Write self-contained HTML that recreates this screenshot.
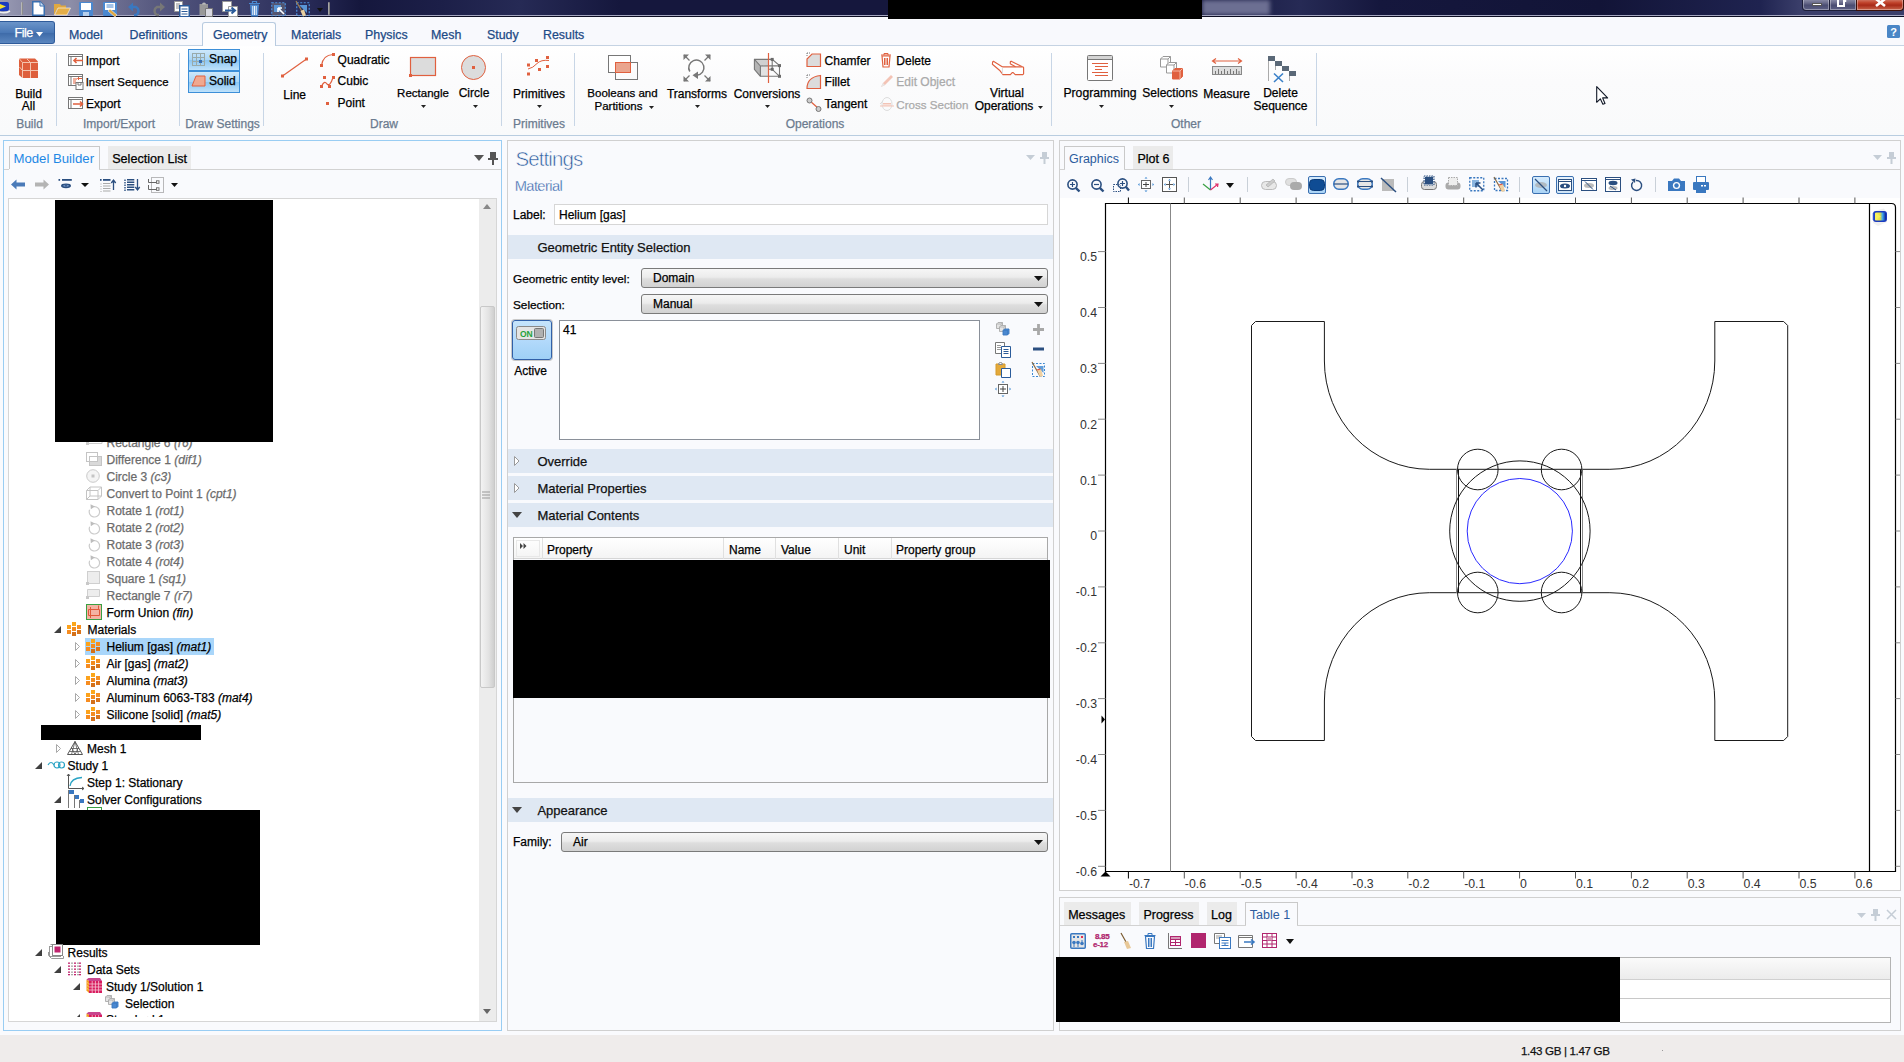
<!DOCTYPE html>
<html><head><meta charset="utf-8">
<style>
html,body{margin:0;padding:0;width:1904px;height:1062px;overflow:hidden;background:#f9fafd;}
body{position:relative;font-family:"Liberation Sans",sans-serif;}
.b{position:absolute;box-sizing:border-box;}
.t{position:absolute;white-space:nowrap;line-height:1;-webkit-text-stroke:0.25px currentColor;}
svg.b{overflow:visible;}
</style></head><body>
<div class="b" style="left:0px;top:0px;width:1904px;height:17px;background:linear-gradient(90deg,#9a9bb4 0px,#7e809e 40px,#8d8ea8 70px,#6e7092 110px,#5a5c82 150px,#474a74 200px,#3a3d68 250px,#2a2d5a 300px,#15173d 360px,#1c1f48 440px,#262a55 520px,#15173d 620px,#15173d 1200px,#262a55 1300px,#15173d 1380px,#121437 1600px,#1f2350 1760px,#3a3e6a 1800px);"></div>
<div class="b" style="left:1202px;top:0px;width:68px;height:15px;background:#6c6f92;filter:blur(2px);"></div>
<div class="b" style="left:0px;top:15px;width:1904px;height:1px;background:#a4a6c0;"></div>
<div class="b" style="left:0px;top:16px;width:1904px;height:1px;background:#0c0d22;"></div>
<svg class="b" style="left:0px;top:1px;" width="10" height="12" viewBox="0 0 10 12"><rect x="-3" y="1" width="12" height="9" rx="2" fill="#1a3bbf"/><path d="M0 3L6 5.5L0 8Z" fill="#f5e02a"/><path d="M-1 11Q5 13 10 10" stroke="#eee" stroke-width="1.5" fill="none"/></svg>
<div class="b" style="left:21px;top:2px;width:2px;height:13px;background:linear-gradient(90deg,#ccc,#777);border-radius:1px;"></div>
<svg class="b" style="left:32px;top:1px;" width="13" height="15" viewBox="0 0 13 15"><path d="M0.75 0.75H8L12.25 5V14.25H0.75Z" fill="#fff" stroke="#3a6fb0" stroke-width="1.5"/><path d="M8 0.75V5H12" fill="#cfe0f4" stroke="#3a6fb0"/></svg>
<svg class="b" style="left:54px;top:3px;" width="17" height="12" viewBox="0 0 17 12"><path d="M0 1H6L7 2.5H12V5H4L0 12Z" fill="#e0a840"/><path d="M0.5 12L4 5H16.5L13 12Z" fill="#e4ae48" stroke="#fff" stroke-width="0.6"/></svg>
<svg class="b" style="left:79px;top:2px;" width="14" height="14" viewBox="0 0 14 14"><rect x="0" y="0" width="14" height="14" rx="1" fill="#4a88d0"/><rect x="2" y="1" width="10" height="7" fill="#fff"/><rect x="4" y="10" width="6" height="4" fill="#fff" opacity="0.6"/></svg>
<svg class="b" style="left:103px;top:2px;" width="16" height="15" viewBox="0 0 16 15"><rect x="0" y="0" width="14" height="14" rx="1" fill="#4a88d0"/><rect x="2" y="1" width="10" height="7" fill="#fff"/><path d="M3.5 3H10.5M3.5 5H10.5" stroke="#4a88d0"/><path d="M7 7L14 13L12 15L5 9Z" fill="#e0a840" stroke="#fff" stroke-width="0.5"/></svg>
<svg class="b" style="left:128px;top:2px;" width="14" height="14" viewBox="0 0 14 14"><path d="M4.5 5H8A4.5 4.5 0 0 1 8 13H6" stroke="#3a78c0" stroke-width="2.4" fill="none"/><path d="M0 5L5 0.5V9.5Z" fill="#3a78c0"/></svg>
<svg class="b" style="left:151px;top:2px;" width="14" height="14" viewBox="0 0 14 14"><path d="M9.5 5H6A4.5 4.5 0 0 0 6 13H8" stroke="#777" stroke-width="2.4" fill="none"/><path d="M14 5L9 0.5V9.5Z" fill="#777"/></svg>
<svg class="b" style="left:174px;top:1px;" width="16" height="16" viewBox="0 0 16 16"><path d="M0.5 0.5H8.5V10.5H0.5Z" fill="#fff" stroke="#999"/><path d="M2 3H6M2 5H6M2 7H6" stroke="#888"/><rect x="5.75" y="4.75" width="9.5" height="11" fill="#fff" stroke="#2b5b9a" stroke-width="1.5"/><path d="M7.5 8H13.5M7.5 10.5H13.5M7.5 13H13.5" stroke="#2b5b9a" stroke-width="1.2"/></svg>
<svg class="b" style="left:199px;top:2px;" width="14" height="15" viewBox="0 0 14 15"><path d="M0.5 2H9V13H0.5Z" fill="#999"/><path d="M3 2.5Q3 0.5 5 0.5Q7 0.5 7 2.5Z" fill="#bbb"/><path d="M6.5 6.5H13.5V14.5H6.5Z" fill="#d8d8e0" stroke="#777"/></svg>
<svg class="b" style="left:222px;top:1px;" width="16" height="16" viewBox="0 0 16 16"><path d="M0.5 0.5H9.5V10.5H0.5Z" fill="#fff" stroke="#999"/><path d="M6.5 5.5H15.5V15.5H6.5Z" fill="#fff" stroke="#999"/><path d="M3 9.5H12M9.5 6.5L13 9.5L9.5 12.5" stroke="#2b5b9a" stroke-width="2" fill="none"/></svg>
<svg class="b" style="left:249px;top:1px;" width="11" height="16" viewBox="0 0 11 16"><path d="M0 2.5H11M3.5 2.5V0.5H7.5V2.5" stroke="#4a88d0" stroke-width="1.2" fill="none"/><path d="M1 3.5L2 15.5H9L10 3.5Z" fill="#4a88d0"/><path d="M3.8 5V14M5.5 5V14M7.2 5V14" stroke="#fff" stroke-width="0.9"/></svg>
<svg class="b" style="left:271px;top:2px;" width="15" height="15" viewBox="0 0 15 15"><rect x="0.75" y="0.75" width="13.5" height="13" fill="#888" fill-opacity="0.4" stroke="#4a90e0" stroke-width="1.2" stroke-dasharray="2 1.5"/><rect x="3" y="3" width="7" height="7" fill="#5a96d6"/><path d="M7 6L13 12M7 6V10M7 6H11" stroke="#fff" stroke-width="1.6" fill="none"/></svg>
<svg class="b" style="left:295px;top:1px;" width="15" height="16" viewBox="0 0 15 16"><rect x="1.75" y="1.75" width="12.5" height="13" fill="none" stroke="#4a90e0" stroke-width="1.2" stroke-dasharray="2 1.5"/><path d="M4 4H12V12Z" fill="#5a96d6"/><path d="M1 0L8.5 13" stroke="#a08050" stroke-width="1.2"/><path d="M5.5 10L9 8.5L11 14.5L8 15.5Z" fill="#e8d0a0"/></svg>
<svg class="b" style="left:317px;top:8px;" width="6" height="4" viewBox="0 0 6 4"><path d="M0 0H6L3 4Z" fill="#111"/></svg>
<div class="b" style="left:328px;top:2px;width:2px;height:13px;background:linear-gradient(90deg,#bbb,#666);border-radius:1px;"></div>
<div class="b" style="left:1802px;top:-2px;width:28px;height:13px;background:linear-gradient(#9a9cb4,#6a6c8c 40%,#4a4d72 60%,#5c5f84);border:1px solid #1c1e38;border-top:none;border-radius:0 0 0 4px;box-shadow:inset 0 0 0 1px rgba(255,255,255,0.35);"></div>
<div class="b" style="left:1812px;top:3px;width:10px;height:3px;background:#fff;border:1px solid #555;"></div>
<div class="b" style="left:1829px;top:-2px;width:28px;height:13px;background:linear-gradient(#9a9cb4,#6a6c8c 40%,#4a4d72 60%,#5c5f84);border:1px solid #1c1e38;border-top:none;box-shadow:inset 0 0 0 1px rgba(255,255,255,0.35);"></div>
<svg class="b" style="left:1837px;top:-1px;" width="10" height="9" viewBox="0 0 10 9"><rect x="1" y="0" width="6" height="7" fill="none" stroke="#fff" stroke-width="2"/><path d="M8.5 0V3" stroke="#fff" stroke-width="1.5"/></svg>
<div class="b" style="left:1856px;top:-2px;width:48px;height:13px;background:linear-gradient(#d99080,#c0422a 40%,#a82a18 60%,#c8644a);border:1px solid #3a1008;border-top:none;border-radius:0 0 4px 0;box-shadow:inset 0 0 0 1px rgba(255,255,255,0.35);"></div>
<svg class="b" style="left:1875px;top:-1px;" width="11" height="8" viewBox="0 0 11 8"><path d="M1 0L10 7M10 0L1 7" stroke="#fff" stroke-width="2.6"/></svg>
<div class="b" style="left:0px;top:17px;width:1904px;height:28px;background:#f8f9fd;"></div>
<div class="b" style="left:0px;top:45px;width:1904px;height:90px;background:linear-gradient(#ffffff,#fbfbfc 40%,#f9fafb);"></div>
<div class="b" style="left:0px;top:45px;width:1904px;height:1px;background:#c5d3e3;"></div>
<div class="b" style="left:0px;top:135px;width:1904px;height:1px;background:#b9cde0;"></div>
<div class="b" style="left:888px;top:0px;width:314px;height:19px;background:#000;"></div>
<div class="b" style="left:0px;top:21px;width:55px;height:23px;background:linear-gradient(#6b94c9,#4a78b6 50%,#3d6aa8 51%,#5a86bf);border:1px solid #2f5b9a;border-left:none;border-radius:0 3px 3px 0;"></div>
<div class="t " style="left:14.6px;top:26.73px;font-size:12.6px;color:#fff;letter-spacing:-0.55px">File</div>
<svg class="b" style="left:36px;top:32px;" width="7" height="5" viewBox="0 0 7 5"><path d="M0 0H7L3.5 4.5Z" fill="#fff"/></svg>
<div class="b" style="left:202px;top:22px;width:74px;height:24px;background:#fdfdfe;border:1px solid #b8cbe0;border-bottom:none;border-radius:3px 3px 0 0;"></div>
<div class="t " style="left:69px;top:28.80px;font-size:12.4px;color:#1d4a86;">Model</div>
<div class="t " style="left:129.5px;top:28.80px;font-size:12.4px;color:#1d4a86;">Definitions</div>
<div class="t " style="left:213px;top:28.80px;font-size:12.4px;color:#1d4a86;">Geometry</div>
<div class="t " style="left:291px;top:28.80px;font-size:12.4px;color:#1d4a86;">Materials</div>
<div class="t " style="left:365px;top:28.80px;font-size:12.4px;color:#1d4a86;">Physics</div>
<div class="t " style="left:431px;top:28.80px;font-size:12.4px;color:#1d4a86;">Mesh</div>
<div class="t " style="left:487px;top:28.80px;font-size:12.4px;color:#1d4a86;">Study</div>
<div class="t " style="left:543px;top:28.80px;font-size:12.4px;color:#1d4a86;">Results</div>
<svg class="b" style="left:1887px;top:25px;" width="13" height="13" viewBox="0 0 13 13"><rect x="0" y="0" width="13" height="13" rx="1.5" fill="#4a86c6"/><text x="6.5" y="10.5" font-size="11" font-weight="bold" text-anchor="middle" fill="#fff" font-family="Liberation Sans">?</text></svg>
<div class="t" style="left:-120.5px;width:300px;text-align:center;top:117.64px;font-size:12px;color:#6b7b8f;">Build</div>
<div class="t" style="left:-31px;width:300px;text-align:center;top:117.64px;font-size:12px;color:#6b7b8f;">Import/Export</div>
<div class="t" style="left:72.5px;width:300px;text-align:center;top:117.64px;font-size:12px;color:#6b7b8f;">Draw Settings</div>
<div class="t" style="left:234px;width:300px;text-align:center;top:117.64px;font-size:12px;color:#6b7b8f;">Draw</div>
<div class="t" style="left:389px;width:300px;text-align:center;top:117.64px;font-size:12px;color:#6b7b8f;">Primitives</div>
<div class="t" style="left:665px;width:300px;text-align:center;top:117.64px;font-size:12px;color:#6b7b8f;">Operations</div>
<div class="t" style="left:1036px;width:300px;text-align:center;top:117.64px;font-size:12px;color:#6b7b8f;">Other</div>
<div class="b" style="left:56px;top:53px;width:1px;height:73px;background:#c8d6e6;"></div>
<div class="b" style="left:179px;top:53px;width:1px;height:73px;background:#c8d6e6;"></div>
<div class="b" style="left:263px;top:53px;width:1px;height:73px;background:#c8d6e6;"></div>
<div class="b" style="left:501px;top:53px;width:1px;height:73px;background:#c8d6e6;"></div>
<div class="b" style="left:574px;top:53px;width:1px;height:73px;background:#c8d6e6;"></div>
<div class="b" style="left:1051px;top:53px;width:1px;height:73px;background:#c8d6e6;"></div>
<div class="b" style="left:1316px;top:53px;width:1px;height:73px;background:#c8d6e6;"></div>
<svg class="b" style="left:19px;top:58px;" width="20" height="21" viewBox="0 0 20 21"><path d="M0 1L1 0.5H16L19 3.5V20H3.5L0 17Z" fill="#de5f3c"/><path d="M3.5 4.5H19M3.5 12.5H19M11.5 4.5V20M3.5 4.5V20M0.5 1L3.5 4.5M8 1L11.5 4.5M0.5 9L3.5 12.5" stroke="#f4c4ae" stroke-width="1"/></svg>
<div class="t" style="left:-121.5px;width:300px;text-align:center;top:87.84px;font-size:12px;color:#000;">Build</div>
<div class="t" style="left:-121.5px;width:300px;text-align:center;top:99.84px;font-size:12px;color:#000;">All</div>
<svg class="b" style="left:68px;top:54px;" width="17" height="14" viewBox="0 0 17 14"><rect x="0.5" y="0.5" width="14" height="11" fill="#fff" stroke="#777"/><path d="M0.5 2.5H14.5M3 2.5V11.5" stroke="#777"/><path d="M15 6.5H6M8.5 4L6 6.5L8.5 9" stroke="#e0603f" stroke-width="1.6" fill="none"/></svg>
<div class="t " style="left:85.7px;top:55.14px;font-size:12px;color:#000;">Import</div>
<svg class="b" style="left:68px;top:74px;" width="17" height="16" viewBox="0 0 17 16"><rect x="0.5" y="0.5" width="14" height="11" fill="#fff" stroke="#777"/><path d="M0.5 2.5H14.5M3 2.5V11.5" stroke="#777"/><path d="M5 5H9M5 7H8M5 9H9" stroke="#e0603f"/><rect x="8" y="8.5" width="7" height="7" fill="#fff" stroke="#777"/><path d="M10 9V11H13V9" stroke="#777" fill="none"/><path d="M14 4.5H10M11 3L9.5 4.5L11 6" stroke="#e0603f" fill="none"/></svg>
<div class="t " style="left:85.7px;top:77.05px;font-size:11.4px;color:#000;">Insert Sequence</div>
<svg class="b" style="left:68px;top:97px;" width="17" height="14" viewBox="0 0 17 14"><rect x="0.5" y="0.5" width="14" height="11" fill="#fff" stroke="#777"/><path d="M0.5 2.5H14.5M3 2.5V11.5" stroke="#777"/><path d="M5 7H14M12 4.5L14.5 7L12 9.5" stroke="#e0603f" stroke-width="1.6" fill="none"/></svg>
<div class="t " style="left:86px;top:98.24px;font-size:12px;color:#000;">Export</div>
<div class="b" style="left:188px;top:49px;width:52px;height:22px;background:linear-gradient(#cde8fb,#a9d6f7 50%,#8cc6f2 51%,#bfe2fb);border:1px solid #3d8fd8;"></div>
<div class="b" style="left:188px;top:71px;width:52px;height:22px;background:linear-gradient(#cde8fb,#a9d6f7 50%,#8cc6f2 51%,#bfe2fb);border:1px solid #3d8fd8;"></div>
<svg class="b" style="left:192px;top:53px;" width="13" height="13" viewBox="0 0 13 13"><rect x="0.5" y="0.5" width="12" height="12" fill="none" stroke="#9aa"/><path d="M4.5 0.5V12.5M8.5 0.5V12.5M0.5 4.5H12.5M0.5 8.5H12.5" stroke="#9aa"/><rect x="7" y="7" width="3" height="3" fill="#3a6fb0"/></svg>
<div class="t " style="left:209px;top:53.04px;font-size:12px;color:#000;">Snap</div>
<svg class="b" style="left:191px;top:75px;" width="15" height="12" viewBox="0 0 15 12"><path d="M1 11L5 1H14V11Z" fill="#f0a890" stroke="#e0603f"/></svg>
<div class="t " style="left:209px;top:75.44px;font-size:12px;color:#000;">Solid</div>
<svg class="b" style="left:280px;top:56px;" width="29" height="22" viewBox="0 0 29 22"><path d="M2.5 20L26.5 3" stroke="#e0603f" stroke-width="1.2"/><rect x="1" y="18.5" width="3" height="3" fill="#e0603f"/><rect x="25" y="1.5" width="3" height="3" fill="#e0603f"/></svg>
<div class="t " style="left:283.3px;top:88.84px;font-size:12px;color:#000;">Line</div>
<svg class="b" style="left:319px;top:52px;" width="17" height="16" viewBox="0 0 17 16"><path d="M2.5 13.5Q4 3 14 2.5" stroke="#e0603f" stroke-width="1.2" fill="none"/><rect x="1" y="12" width="3" height="3" fill="#e0603f"/><rect x="13" y="1" width="3" height="3" fill="#e0603f"/></svg>
<div class="t " style="left:337.6px;top:53.54px;font-size:12px;color:#000;">Quadratic</div>
<svg class="b" style="left:319px;top:75px;" width="17" height="14" viewBox="0 0 17 14"><path d="M2.5 11.5Q5 5 8 9Q11 12 14 2.5" stroke="#e0603f" stroke-width="1.2" fill="none"/><rect x="1" y="10" width="3" height="3" fill="#e0603f"/><rect x="4" y="1" width="3" height="3" fill="#e0603f"/><rect x="9" y="10" width="3" height="3" fill="#e0603f"/><rect x="13" y="1" width="3" height="3" fill="#e0603f"/></svg>
<div class="t " style="left:337.6px;top:75.04px;font-size:12px;color:#000;">Cubic</div>
<div class="b" style="left:326px;top:102px;width:3px;height:3px;background:#e0603f;"></div>
<div class="t " style="left:337.6px;top:97.44px;font-size:12px;color:#000;">Point</div>
<svg class="b" style="left:408px;top:56px;" width="29" height="21" viewBox="0 0 29 21"><rect x="2.5" y="1.5" width="25" height="18" fill="#dcdcdc" stroke="#e0603f" stroke-width="1.2"/><rect x="1" y="18" width="3" height="3" fill="#e0603f"/></svg>
<div class="t" style="left:273px;width:300px;text-align:center;top:87.57px;font-size:11.5px;color:#000;">Rectangle</div>
<svg class="b" style="left:421.0px;top:105.0px;" width="5" height="3" viewBox="0 0 5 3"><path d="M0 0H5L2.5 3Z" fill="#222"/></svg>
<svg class="b" style="left:461px;top:55px;" width="26" height="26" viewBox="0 0 26 26"><circle cx="12.5" cy="12.5" r="12" fill="#dcdcdc" stroke="#e0603f" stroke-width="1"/><rect x="11" y="11" width="3" height="3" fill="#e0603f"/></svg>
<div class="t" style="left:324px;width:300px;text-align:center;top:87.14px;font-size:12px;color:#000;">Circle</div>
<svg class="b" style="left:473.0px;top:105.0px;" width="5" height="3" viewBox="0 0 5 3"><path d="M0 0H5L2.5 3Z" fill="#222"/></svg>
<svg class="b" style="left:527px;top:56px;" width="24" height="20" viewBox="0 0 24 20"><path d="M1 13Q6 12 10 7.5Q14 3.5 22 4.5" stroke="#e0603f" fill="none"/><rect x="0" y="7.5" width="3" height="3" fill="#e0603f"/><rect x="0" y="16.5" width="3" height="3" fill="#e0603f"/><rect x="8" y="3" width="3" height="3" fill="#e0603f"/><rect x="11" y="12" width="3" height="3" fill="#e0603f"/><rect x="19" y="0" width="3" height="3" fill="#e0603f"/><rect x="19" y="9" width="3" height="3" fill="#e0603f"/></svg>
<div class="t" style="left:389px;width:300px;text-align:center;top:87.54px;font-size:12px;color:#000;">Primitives</div>
<svg class="b" style="left:537.0px;top:105.0px;" width="5" height="3" viewBox="0 0 5 3"><path d="M0 0H5L2.5 3Z" fill="#222"/></svg>
<svg class="b" style="left:607px;top:54px;" width="32" height="27" viewBox="0 0 32 27"><rect x="1.5" y="1.5" width="22" height="17" fill="#fff" stroke="#777"/><rect x="8.5" y="8.5" width="22" height="17" fill="none" stroke="#777"/><rect x="8.5" y="8.5" width="15" height="10" fill="#eaa58e" stroke="#e0603f"/></svg>
<div class="t" style="left:472.5px;width:300px;text-align:center;top:87.97px;font-size:11.5px;color:#000;">Booleans and</div>
<div class="t " style="left:594.5px;top:100.97px;font-size:11.5px;color:#000;">Partitions</div>
<svg class="b" style="left:649.0px;top:105.5px;" width="5" height="3" viewBox="0 0 5 3"><path d="M0 0H5L2.5 3Z" fill="#222"/></svg>
<svg class="b" style="left:680px;top:52px;" width="32" height="32" viewBox="0 0 32 32"><path d="M9.8 19.5A7.6 7.6 0 1 1 17.0 23.2" fill="none" stroke="#777" stroke-width="1.5"/><path d="M12.5 23.3L18.0 19.5L18.0 27.0Z" fill="#777"/><path d="M4.0 3.0L9.5 8.5 M30.0 3.0L24.5 8.5 M4.0 29.0L9.5 23.5 M30.0 29.0L24.5 23.5" stroke="#777" stroke-width="1.3"/><path d="M3.5 2.5L9.0 2.5L3.5 8.0Z M30.5 2.5L25.0 2.5L30.5 8.0Z M3.5 29.5L9.0 29.5L3.5 24.0Z M30.5 29.5L25.0 29.5L30.5 24.0Z" fill="#777"/></svg>
<div class="t" style="left:547px;width:300px;text-align:center;top:87.54px;font-size:12px;color:#000;">Transforms</div>
<svg class="b" style="left:695.0px;top:105.0px;" width="5" height="3" viewBox="0 0 5 3"><path d="M0 0H5L2.5 3Z" fill="#222"/></svg>
<svg class="b" style="left:750px;top:52px;" width="32" height="32" viewBox="0 0 32 32"><path d="M4.4 7.4L18.5 7.4L18.5 14.0L10.4 14.0Z" fill="#d0d0d0"/><path d="M10.4 14.0L18.5 14.0L18.5 24.3L10.4 24.3Z" fill="#e2e2e2"/><path d="M4.4 7.4L10.4 14.0L10.4 24.3L4.4 17.3Z" fill="#b4b4b4" stroke="#777" stroke-width="1.1" stroke-linejoin="round"/><path d="M4.4 7.4L22.2 7.4L29.5 13.6L29.5 24.3L10.4 24.3 M10.4 14.0L29.5 13.6 M22.2 7.4L22.2 17.3L29.5 24.3 M18.5 17.3L22.2 17.3" fill="none" stroke="#777" stroke-width="1.1"/><rect x="20.7" y="5.9" width="3" height="3" fill="#6a6a6a"/><rect x="28.0" y="12.1" width="3" height="3" fill="#6a6a6a"/><rect x="20.7" y="15.8" width="3" height="3" fill="#6a6a6a"/><rect x="28.0" y="22.8" width="3" height="3" fill="#6a6a6a"/><path d="M18.5 1.0L18.5 31.0" stroke="#e0603f" stroke-width="1.2"/></svg>
<div class="t" style="left:617px;width:300px;text-align:center;top:87.54px;font-size:12px;color:#000;">Conversions</div>
<svg class="b" style="left:765.0px;top:105.0px;" width="5" height="3" viewBox="0 0 5 3"><path d="M0 0H5L2.5 3Z" fill="#222"/></svg>
<svg class="b" style="left:806px;top:52px;" width="16" height="16" viewBox="0 0 16 16"><path d="M1 1H5M1 1V5" stroke="#777" stroke-dasharray="1 1"/><path d="M1 14.5V7L6 2H14.5V14.5Z" fill="#dcdcdc" stroke="#e0603f" stroke-width="1.2"/></svg>
<div class="t " style="left:824.6px;top:54.54px;font-size:12px;color:#000;">Chamfer</div>
<svg class="b" style="left:806px;top:74px;" width="16" height="16" viewBox="0 0 16 16"><path d="M1 1H5M1 1V5" stroke="#777" stroke-dasharray="1 1"/><path d="M1 14.5Q1 3 14.5 1.5V14.5Z" fill="#dcdcdc" stroke="#e0603f" stroke-width="1.2"/></svg>
<div class="t " style="left:824.6px;top:75.94px;font-size:12px;color:#000;">Fillet</div>
<svg class="b" style="left:806px;top:97px;" width="16" height="16" viewBox="0 0 16 16"><path d="M3.5 3.5L13 12" stroke="#e0603f" stroke-width="1.2"/><circle cx="3.5" cy="3.5" r="2.5" fill="#ccc" stroke="#777"/><circle cx="12.5" cy="12" r="2.5" fill="#ccc" stroke="#777"/></svg>
<div class="t " style="left:824.6px;top:98.24px;font-size:12px;color:#000;">Tangent</div>
<svg class="b" style="left:880px;top:52px;" width="12" height="16" viewBox="0 0 12 16"><path d="M1 3H11M4 3V1.5H8V3" stroke="#e0603f" fill="none"/><path d="M2 4L3 15H9L10 4Z" fill="none" stroke="#e0603f" stroke-width="1.2"/><path d="M4.5 6V13M6 6V13M7.5 6V13" stroke="#e0603f"/></svg>
<div class="t " style="left:896.3px;top:54.54px;font-size:12px;color:#000;">Delete</div>
<svg class="b" style="left:880px;top:74px;" width="14" height="14" viewBox="0 0 14 14"><path d="M1 13L3 9L11 1L13 3L5 11Z" fill="#f3c3b5"/><path d="M1 13L3 9L5 11Z" fill="#e6e6e6"/></svg>
<div class="t " style="left:896.3px;top:75.94px;font-size:12px;color:#aaa;">Edit Object</div>
<svg class="b" style="left:879px;top:96px;" width="16" height="17" viewBox="0 0 16 17"><ellipse cx="8" cy="8" rx="5" ry="6.5" fill="none" stroke="#ddd"/><path d="M1 10H15M4 7.5H12M4 9H12" stroke="#f3c3b5"/><path d="M1 8L4 5" stroke="#ddd"/></svg>
<div class="t " style="left:896.3px;top:98.58px;font-size:11.6px;color:#aaa;">Cross Section</div>
<svg class="b" style="left:990px;top:58px;" width="36" height="20" viewBox="0 0 36 20"><path d="M2.6 4.0L3.4 3.3L12.6 8.9L33.0 8.9L33.6 9.6L33.6 15.8L32.8 16.6L25.2 16.6L23.2 14.6L22.2 14.6L20.4 16.6L13.0 16.6L9.5 12.2L2.4 6.2Z" fill="#fff" stroke="#e0603f" stroke-width="1.15" stroke-linejoin="round"/><path d="M20.2 5.8L20.4 3.6L21.2 3.2L31.8 8.5M20.2 5.8L25.5 8.7" fill="none" stroke="#e0603f" stroke-width="1.15" stroke-linejoin="round"/><path d="M12.4 9.5L12.4 16.0" stroke="#ddd" stroke-width="1"/></svg>
<div class="t" style="left:857px;width:300px;text-align:center;top:87.34px;font-size:12px;color:#000;">Virtual</div>
<div class="t" style="left:854px;width:300px;text-align:center;top:100.04px;font-size:12px;color:#000;">Operations</div>
<svg class="b" style="left:1038.0px;top:105.5px;" width="5" height="3" viewBox="0 0 5 3"><path d="M0 0H5L2.5 3Z" fill="#222"/></svg>
<svg class="b" style="left:1087px;top:55px;" width="26" height="26" viewBox="0 0 26 26"><rect x="0.5" y="0.5" width="25" height="25" rx="1" fill="#fff" stroke="#777"/><rect x="1" y="1" width="24" height="3.5" fill="#d4d4d4"/><path d="M0.5 4.5H25.5" stroke="#777"/><path d="M5 8.5H21M8 11.5H21M8 14.5H15M5 17.5H21M8 20.5H21" stroke="#e0603f"/></svg>
<div class="t" style="left:950px;width:300px;text-align:center;top:87.17px;font-size:12.2px;color:#000;">Programming</div>
<svg class="b" style="left:1099.0px;top:105.0px;" width="5" height="3" viewBox="0 0 5 3"><path d="M0 0H5L2.5 3Z" fill="#222"/></svg>
<svg class="b" style="left:1159px;top:55px;" width="26" height="26" viewBox="0 0 26 26"><path d="M1.5 4.0L4.0 1.5H11.5L11.5 9.5L9.0 12.0H1.5Z" fill="#fff" stroke="#999"/><path d="M1.5 4.0H9.0V12.0M9.0 4.0L11.5 1.5" fill="none" stroke="#999"/><path d="M7.5 10.0L10.0 7.5H17.5L17.5 15.5L15.0 18.0H7.5Z" fill="#fff" stroke="#999"/><path d="M7.5 10.0H15.0V18.0M15.0 10.0L17.5 7.5" fill="none" stroke="#999"/><path d="M13.5 16.0L16.0 13.5H23.5L23.5 21.5L21.0 24.0H13.5Z" fill="#e0603f" stroke="#e0603f"/><path d="M13.5 16.0H21.0V24.0M21.0 16.0L23.5 13.5" fill="none" stroke="#f5b8a4"/></svg>
<div class="t" style="left:1020px;width:300px;text-align:center;top:87.34px;font-size:12px;color:#000;">Selections</div>
<svg class="b" style="left:1169.0px;top:105.0px;" width="5" height="3" viewBox="0 0 5 3"><path d="M0 0H5L2.5 3Z" fill="#222"/></svg>
<svg class="b" style="left:1211px;top:58px;" width="32" height="18" viewBox="0 0 32 18"><path d="M1.5 3H30.5M5 0.5L1.5 3L5 5.5M27 0.5L30.5 3L27 5.5" stroke="#e0603f" stroke-width="1.2" fill="none"/><rect x="1.5" y="8.5" width="29" height="8" fill="#ddd" stroke="#888"/><path d="M4.5 16V13M7.5 16V11M10.5 16V13M13.5 16V11M16.5 16V13M19.5 16V11M22.5 16V13M25.5 16V11M28 16V13" stroke="#777"/></svg>
<div class="t" style="left:1076.5px;width:300px;text-align:center;top:87.84px;font-size:12px;color:#000;">Measure</div>
<svg class="b" style="left:1267px;top:55px;" width="30" height="28" viewBox="0 0 30 28"><path d="M1.5 5V26M8.5 10V15M22.5 21V26" stroke="#aaa"/><rect x="1" y="1" width="7" height="5" fill="#5a6877"/><rect x="8" y="6" width="7" height="5" fill="#5a6877"/><rect x="15" y="11" width="7" height="5" fill="#5a6877"/><rect x="22" y="16" width="7" height="5" fill="#5a6877"/><path d="M7 18.5L16 27M16 18.5L7 27" stroke="#3a80c8" stroke-width="1.6"/></svg>
<div class="t" style="left:1130.5px;width:300px;text-align:center;top:87.34px;font-size:12px;color:#000;">Delete</div>
<div class="t" style="left:1130.5px;width:300px;text-align:center;top:100.34px;font-size:12px;color:#000;">Sequence</div>
<svg class="b" style="left:1596px;top:86px;" width="13" height="20" viewBox="0 0 13 20"><path d="M0.7 0.7V16.3L4.3 12.8L6.9 18.3L9 17.5L6.6 11.9H11.6Z" fill="#fff" stroke="#111827" stroke-width="1.1" stroke-linejoin="round"/></svg>
<div class="b" style="left:3px;top:140px;width:499px;height:891px;border:1px solid #99cdf3;background:#f9fafd;"></div>
<div class="b" style="left:9px;top:146px;width:91px;height:24px;background:#f9fafd;border:1px solid #c9c9c9;border-bottom:none;"></div>
<div class="b" style="left:4px;top:169px;width:497px;height:1px;background:#d2d2d2;"></div>
<div class="b" style="left:9px;top:169px;width:90px;height:1px;background:#f9fafd;"></div>
<div class="t " style="left:13.4px;top:152.43px;font-size:13.2px;color:#1e88e5;-webkit-text-stroke:0">Model Builder</div>
<div class="b" style="left:108px;top:146px;width:83px;height:23px;background:#ebebeb;"></div>
<div class="t " style="left:112.2px;top:152.93px;font-size:12.6px;color:#000;">Selection List</div>
<svg class="b" style="left:474px;top:155px;" width="10" height="6" viewBox="0 0 10 6"><path d="M0 0H10L5 6Z" fill="#555"/></svg>
<svg class="b" style="left:488px;top:151px;" width="10" height="14" viewBox="0 0 10 14"><path d="M2 1H8V7H10V9H6V14H4V9H0V7H2Z" fill="#555"/></svg>
<svg class="b" style="left:10px;top:179px;" width="16" height="11" viewBox="0 0 16 11"><path d="M1 5.5L6.5 0.5V3.5H15V7.5H6.5V10.5Z" fill="#4a7ab8"/></svg>
<svg class="b" style="left:34px;top:179px;" width="16" height="11" viewBox="0 0 16 11"><path d="M15 5.5L9.5 0.5V3.5H1V7.5H9.5V10.5Z" fill="#b4b4b4"/></svg>
<svg class="b" style="left:58px;top:178px;" width="15" height="11" viewBox="0 0 15 11"><rect x="0.5" y="1" width="1.6" height="1.8" fill="#2b4f80"/><rect x="4" y="1" width="9.8" height="1.8" fill="#2b4f80"/><ellipse cx="8" cy="7.8" rx="5" ry="2.4" fill="#2b4f80"/><ellipse cx="8" cy="7.8" rx="3" ry="1.1" fill="#6d8fbf"/><circle cx="8" cy="7.8" r="0.9" fill="#2b4f80"/></svg>
<svg class="b" style="left:81px;top:183px;" width="8" height="4" viewBox="0 0 8 4"><path d="M0 0H8L4 4Z" fill="#111"/></svg>
<svg class="b" style="left:100px;top:178px;" width="17" height="14" viewBox="0 0 17 14"><rect x="0" y="1" width="1.6" height="1.8" fill="#2b4f80"/><rect x="3" y="1" width="7.5" height="1.8" fill="#2b4f80"/><path d="M1 5.5V14" stroke="#aaa" stroke-dasharray="1 1.5"/><path d="M3 5.5H10.5M3 8H10.5M3 10.5H10.5M3 13H10.5" stroke="#aaa" stroke-width="1.2"/><path d="M13.5 12V2.5M11.3 5L13.5 2L15.7 5" stroke="#2b4f80" stroke-width="1.3" fill="none"/></svg>
<svg class="b" style="left:124px;top:178px;" width="17" height="14" viewBox="0 0 17 14"><path d="M1 1.5V14" stroke="#2b4f80" stroke-width="1.4" stroke-dasharray="1.4 1.1"/><path d="M3 1.8H10.3M3 4.3H10.3M3 6.8H10.3M3 9.3H10.3M3 11.8H10.3" stroke="#2b4f80" stroke-width="1.4"/><path d="M13.5 1V11.5M11.3 9L13.5 12L15.7 9" stroke="#2b4f80" stroke-width="1.3" fill="none"/></svg>
<svg class="b" style="left:147px;top:177px;" width="17" height="16" viewBox="0 0 17 16"><rect x="4.5" y="0.5" width="12" height="15" fill="none" stroke="#777" stroke-dasharray="1 1"/><path d="M1.5 2V5.5H10M1.5 8V12.5H10" stroke="#666" fill="none"/><rect x="9.5" y="3.8" width="2.5" height="2.5" fill="#fff" stroke="#666" stroke-width="0.9"/><rect x="9.5" y="10.8" width="2.5" height="2.5" fill="#fff" stroke="#666" stroke-width="0.9"/></svg>
<svg class="b" style="left:171px;top:183px;" width="7" height="4" viewBox="0 0 7 4"><path d="M0 0H7L3.5 4Z" fill="#111"/></svg>
<div class="b" style="left:8px;top:198px;width:489px;height:824px;background:#fff;border:1px solid #d6d6d6;"></div>
<div class="b" style="left:479px;top:199px;width:17px;height:822px;background:#ececec;"></div>
<svg class="b" style="left:483px;top:204px;" width="8" height="5" viewBox="0 0 8 5"><path d="M0 5H8L4 0Z" fill="#888"/></svg>
<svg class="b" style="left:483px;top:1009px;" width="8" height="5" viewBox="0 0 8 5"><path d="M0 0H8L4 5Z" fill="#666"/></svg>
<div class="b" style="left:480px;top:306px;width:15px;height:382px;background:linear-gradient(90deg,#f3f3f3,#e2e2e2 60%,#cfcfcf);border:1px solid #c8c8c8;border-radius:2px;"></div>
<svg class="b" style="left:481px;top:490px;" width="10" height="12" viewBox="0 0 10 12"><path d="M1 2H9M1 5H9M1 8H9" stroke="#999"/></svg>
<svg class="b" style="left:86px;top:436px;" width="17" height="9" viewBox="0 0 17 9"><path d="M2 0.5H16V7.5H2Z" fill="#fff" stroke="#ccc"/><rect x="0" y="6" width="3" height="3" fill="#ccc"/></svg>
<div class="t" style="left:106.5px;top:437.34px;font-size:12px;color:#6b6b6b">Rectangle 6 <i style="color:#6b6b6b">(r6)</i></div>
<svg class="b" style="left:86px;top:452px;" width="16" height="14" viewBox="0 0 16 14"><rect x="0.5" y="0.5" width="11" height="9" fill="#fff" stroke="#c4c4c4"/><rect x="3.5" y="4.5" width="12" height="9" fill="#d9d9d9" stroke="#c4c4c4"/><rect x="3.5" y="4.5" width="8" height="5" fill="#fff" stroke="#c4c4c4"/></svg>
<div class="t" style="left:106.5px;top:454.34px;font-size:12px;color:#6b6b6b">Difference 1 <i style="color:#6b6b6b">(dif1)</i></div>
<svg class="b" style="left:86px;top:469px;" width="14" height="14" viewBox="0 0 14 14"><circle cx="7" cy="7" r="6.3" fill="#f4f4f4" stroke="#cacaca"/><rect x="5.5" y="5.5" width="3" height="3" fill="#c4c4c4"/></svg>
<div class="t" style="left:106.5px;top:471.34px;font-size:12px;color:#6b6b6b">Circle 3 <i style="color:#6b6b6b">(c3)</i></div>
<svg class="b" style="left:86px;top:486px;" width="16" height="14" viewBox="0 0 16 14"><path d="M0.5 4.5L4 1H15.5V10L12 13.5H0.5Z M0.5 4.5H12V13.5M12 4.5L15.5 1" fill="#fff" stroke="#c4c4c4"/><path d="M4 1V10H15.5M0.5 13.5L4 10" stroke="#c4c4c4" fill="none"/></svg>
<div class="t" style="left:106.5px;top:488.34px;font-size:12px;color:#6b6b6b">Convert to Point 1 <i style="color:#6b6b6b">(cpt1)</i></div>
<svg class="b" style="left:88px;top:504px;" width="13" height="14" viewBox="0 0 13 14"><path d="M6 2.6A5.2 5.2 0 1 1 1.6 5.8" fill="none" stroke="#cbcbcb" stroke-width="1.2"/><path d="M2.5 0.2L2.8 5.2L7 2.4Z" fill="#bdbdbd"/></svg>
<div class="t" style="left:106.5px;top:505.34px;font-size:12px;color:#6b6b6b">Rotate 1 <i style="color:#6b6b6b">(rot1)</i></div>
<svg class="b" style="left:88px;top:521px;" width="13" height="14" viewBox="0 0 13 14"><path d="M6 2.6A5.2 5.2 0 1 1 1.6 5.8" fill="none" stroke="#cbcbcb" stroke-width="1.2"/><path d="M2.5 0.2L2.8 5.2L7 2.4Z" fill="#bdbdbd"/></svg>
<div class="t" style="left:106.5px;top:522.34px;font-size:12px;color:#6b6b6b">Rotate 2 <i style="color:#6b6b6b">(rot2)</i></div>
<svg class="b" style="left:88px;top:538px;" width="13" height="14" viewBox="0 0 13 14"><path d="M6 2.6A5.2 5.2 0 1 1 1.6 5.8" fill="none" stroke="#cbcbcb" stroke-width="1.2"/><path d="M2.5 0.2L2.8 5.2L7 2.4Z" fill="#bdbdbd"/></svg>
<div class="t" style="left:106.5px;top:539.34px;font-size:12px;color:#6b6b6b">Rotate 3 <i style="color:#6b6b6b">(rot3)</i></div>
<svg class="b" style="left:88px;top:555px;" width="13" height="14" viewBox="0 0 13 14"><path d="M6 2.6A5.2 5.2 0 1 1 1.6 5.8" fill="none" stroke="#cbcbcb" stroke-width="1.2"/><path d="M2.5 0.2L2.8 5.2L7 2.4Z" fill="#bdbdbd"/></svg>
<div class="t" style="left:106.5px;top:556.34px;font-size:12px;color:#6b6b6b">Rotate 4 <i style="color:#6b6b6b">(rot4)</i></div>
<svg class="b" style="left:86px;top:571px;" width="15" height="14" viewBox="0 0 15 14"><rect x="1.5" y="0.5" width="12" height="12" fill="#ededed" stroke="#cfcfcf"/><rect x="0" y="11" width="3" height="3" fill="#c8c8c8"/></svg>
<div class="t" style="left:106.5px;top:573.34px;font-size:12px;color:#6b6b6b">Square 1 <i style="color:#6b6b6b">(sq1)</i></div>
<svg class="b" style="left:86px;top:589px;" width="15" height="10" viewBox="0 0 15 10"><path d="M1.5 0.5H13.5V7.5H1.5Z" fill="#ededed" stroke="#cfcfcf"/><rect x="0" y="7" width="3" height="3" fill="#c8c8c8"/></svg>
<div class="t" style="left:106.5px;top:590.34px;font-size:12px;color:#6b6b6b">Rectangle 7 <i style="color:#6b6b6b">(r7)</i></div>
<svg class="b" style="left:86px;top:604px;" width="16" height="16" viewBox="0 0 16 16"><rect x="0.5" y="0.5" width="15" height="15" fill="#f4b3a3" stroke="#3aa043"/><path d="M2.5 5.5H13.5V11.5H2.5ZM4.5 3V14M12.5 1.5V5" fill="none" stroke="#e05a3a"/></svg>
<div class="t" style="left:106.5px;top:607.34px;font-size:12px;color:#000">Form Union <i style="color:#000">(fin)</i></div>
<svg class="b" style="left:54px;top:626px;" width="7" height="7" viewBox="0 0 7 7"><path d="M7 0V7H0Z" fill="#404040"/></svg>
<svg class="b" style="left:67px;top:622px;" width="14" height="14" viewBox="0 0 14 14"><rect x="5" y="0" width="4" height="4" fill="#fba61a"/><rect x="0" y="3" width="4" height="4" fill="#fca21c"/><rect x="10" y="3" width="4" height="4" fill="#f58f22"/><rect x="5" y="5" width="4" height="4" fill="#f38b1f"/><rect x="0" y="8" width="4" height="4" fill="#f68c20"/><rect x="10" y="8" width="4" height="4" fill="#d9741b"/><rect x="5" y="10" width="4" height="4" fill="#d4711a"/></svg>
<div class="t " style="left:87.5px;top:624.34px;font-size:12px;color:#000;">Materials</div>
<div class="b" style="left:85px;top:638px;width:129px;height:17px;background:#a9d6fa;"></div>
<svg class="b" style="left:75px;top:642px;" width="5" height="9" viewBox="0 0 5 9"><path d="M0.5 0.5L4.5 4.5L0.5 8.5Z" fill="#fff" stroke="#a8a8a8"/></svg>
<svg class="b" style="left:86px;top:639px;" width="14" height="14" viewBox="0 0 14 14"><rect x="5" y="0" width="4" height="4" fill="#fba61a"/><rect x="0" y="3" width="4" height="4" fill="#fca21c"/><rect x="10" y="3" width="4" height="4" fill="#f58f22"/><rect x="5" y="5" width="4" height="4" fill="#f38b1f"/><rect x="0" y="8" width="4" height="4" fill="#f68c20"/><rect x="10" y="8" width="4" height="4" fill="#d9741b"/><rect x="5" y="10" width="4" height="4" fill="#d4711a"/></svg>
<div class="t" style="left:106.5px;top:641.34px;font-size:12px;color:#000">Helium [gas] <i style="color:#000">(mat1)</i></div>
<svg class="b" style="left:75px;top:659px;" width="5" height="9" viewBox="0 0 5 9"><path d="M0.5 0.5L4.5 4.5L0.5 8.5Z" fill="#fff" stroke="#a8a8a8"/></svg>
<svg class="b" style="left:86px;top:656px;" width="14" height="14" viewBox="0 0 14 14"><rect x="5" y="0" width="4" height="4" fill="#fba61a"/><rect x="0" y="3" width="4" height="4" fill="#fca21c"/><rect x="10" y="3" width="4" height="4" fill="#f58f22"/><rect x="5" y="5" width="4" height="4" fill="#f38b1f"/><rect x="0" y="8" width="4" height="4" fill="#f68c20"/><rect x="10" y="8" width="4" height="4" fill="#d9741b"/><rect x="5" y="10" width="4" height="4" fill="#d4711a"/></svg>
<div class="t" style="left:106.5px;top:658.34px;font-size:12px;color:#000">Air [gas] <i style="color:#000">(mat2)</i></div>
<svg class="b" style="left:75px;top:676px;" width="5" height="9" viewBox="0 0 5 9"><path d="M0.5 0.5L4.5 4.5L0.5 8.5Z" fill="#fff" stroke="#a8a8a8"/></svg>
<svg class="b" style="left:86px;top:673px;" width="14" height="14" viewBox="0 0 14 14"><rect x="5" y="0" width="4" height="4" fill="#fba61a"/><rect x="0" y="3" width="4" height="4" fill="#fca21c"/><rect x="10" y="3" width="4" height="4" fill="#f58f22"/><rect x="5" y="5" width="4" height="4" fill="#f38b1f"/><rect x="0" y="8" width="4" height="4" fill="#f68c20"/><rect x="10" y="8" width="4" height="4" fill="#d9741b"/><rect x="5" y="10" width="4" height="4" fill="#d4711a"/></svg>
<div class="t" style="left:106.5px;top:675.34px;font-size:12px;color:#000">Alumina <i style="color:#000">(mat3)</i></div>
<svg class="b" style="left:75px;top:693px;" width="5" height="9" viewBox="0 0 5 9"><path d="M0.5 0.5L4.5 4.5L0.5 8.5Z" fill="#fff" stroke="#a8a8a8"/></svg>
<svg class="b" style="left:86px;top:690px;" width="14" height="14" viewBox="0 0 14 14"><rect x="5" y="0" width="4" height="4" fill="#fba61a"/><rect x="0" y="3" width="4" height="4" fill="#fca21c"/><rect x="10" y="3" width="4" height="4" fill="#f58f22"/><rect x="5" y="5" width="4" height="4" fill="#f38b1f"/><rect x="0" y="8" width="4" height="4" fill="#f68c20"/><rect x="10" y="8" width="4" height="4" fill="#d9741b"/><rect x="5" y="10" width="4" height="4" fill="#d4711a"/></svg>
<div class="t" style="left:106.5px;top:692.34px;font-size:12px;color:#000">Aluminum 6063-T83 <i style="color:#000">(mat4)</i></div>
<svg class="b" style="left:75px;top:710px;" width="5" height="9" viewBox="0 0 5 9"><path d="M0.5 0.5L4.5 4.5L0.5 8.5Z" fill="#fff" stroke="#a8a8a8"/></svg>
<svg class="b" style="left:86px;top:707px;" width="14" height="14" viewBox="0 0 14 14"><rect x="5" y="0" width="4" height="4" fill="#fba61a"/><rect x="0" y="3" width="4" height="4" fill="#fca21c"/><rect x="10" y="3" width="4" height="4" fill="#f58f22"/><rect x="5" y="5" width="4" height="4" fill="#f38b1f"/><rect x="0" y="8" width="4" height="4" fill="#f68c20"/><rect x="10" y="8" width="4" height="4" fill="#d9741b"/><rect x="5" y="10" width="4" height="4" fill="#d4711a"/></svg>
<div class="t" style="left:106.5px;top:709.34px;font-size:12px;color:#000">Silicone [solid] <i style="color:#000">(mat5)</i></div>
<div class="b" style="left:55px;top:200px;width:218px;height:242px;background:#000;"></div>
<div class="b" style="left:41px;top:725px;width:160px;height:15px;background:#000;"></div>
<svg class="b" style="left:56px;top:744px;" width="5" height="9" viewBox="0 0 5 9"><path d="M0.5 0.5L4.5 4.5L0.5 8.5Z" fill="#fff" stroke="#a8a8a8"/></svg>
<svg class="b" style="left:67px;top:741px;" width="16" height="14" viewBox="0 0 16 14"><path d="M8 0.5L15.5 13.5H0.5Z" fill="#fff" stroke="#555"/><path d="M4 7.5H12M2.5 10.5H13.5M8 0.5L4.5 13.5M8 0.5L11.5 13.5M5 7.5L8 13.5L11 7.5" stroke="#555" fill="none" stroke-width="0.8"/></svg>
<div class="t " style="left:87px;top:743.34px;font-size:12px;color:#000;">Mesh 1</div>
<svg class="b" style="left:35px;top:762px;" width="7" height="7" viewBox="0 0 7 7"><path d="M7 0V7H0Z" fill="#404040"/></svg>
<svg class="b" style="left:48px;top:760px;" width="17" height="10" viewBox="0 0 17 10"><path d="M0 5Q3 0 6 5" stroke="#2aa3c4" fill="none" stroke-width="1.2"/><circle cx="9" cy="5" r="3" fill="none" stroke="#2aa3c4" stroke-width="1.2"/><circle cx="13.5" cy="5" r="3" fill="none" stroke="#2aa3c4" stroke-width="1.2"/></svg>
<div class="t " style="left:67.6px;top:760.34px;font-size:12px;color:#000;">Study 1</div>
<svg class="b" style="left:67px;top:774px;" width="18" height="16" viewBox="0 0 18 16"><path d="M1.5 0V14.5H17" stroke="#555" fill="none"/><path d="M3 12Q4 4 15 3.5" stroke="#2aa3c4" fill="none" stroke-width="1.3"/><path d="M0 2L1.5 0L3 2M15 13L17 14.5L15 16" stroke="#555" fill="none"/></svg>
<div class="t " style="left:87px;top:777.34px;font-size:12px;color:#000;">Step 1: Stationary</div>
<svg class="b" style="left:54px;top:796px;" width="7" height="7" viewBox="0 0 7 7"><path d="M7 0V7H0Z" fill="#404040"/></svg>
<svg class="b" style="left:67px;top:790px;" width="17" height="18" viewBox="0 0 17 18"><path d="M1.5 0V18M7.5 5V18M12.5 10V18" stroke="#777" fill="none"/><rect x="2" y="0" width="5" height="4" fill="#3a78c0"/><rect x="8" y="5" width="4" height="4" fill="#3a78c0"/><rect x="13" y="9" width="4" height="4" fill="#3a78c0"/></svg>
<div class="t " style="left:87px;top:794.34px;font-size:12px;color:#000;">Solver Configurations</div>
<div class="b" style="left:87px;top:807px;width:15px;height:3px;border:1px solid #3aa043;border-bottom:none;background:#fff;"></div>
<div class="b" style="left:56px;top:810px;width:204px;height:135px;background:#000;"></div>
<svg class="b" style="left:35px;top:949px;" width="7" height="7" viewBox="0 0 7 7"><path d="M7 0V7H0Z" fill="#404040"/></svg>
<svg class="b" style="left:48px;top:943px;" width="17" height="17" viewBox="0 0 17 17"><path d="M2.5 1.5H10.5V4M0.5 9V12.5L3.5 15.5H15.5V13" fill="none" stroke="#999"/><rect x="1.5" y="3.5" width="11" height="10" fill="#fff" stroke="#999"/><rect x="4.5" y="1.5" width="10" height="11" fill="#fff" stroke="#888"/><rect x="6.5" y="3.5" width="6" height="6" fill="#c0246e"/></svg>
<div class="t " style="left:67.6px;top:947.34px;font-size:12px;color:#000;">Results</div>
<svg class="b" style="left:54px;top:966px;" width="7" height="7" viewBox="0 0 7 7"><path d="M7 0V7H0Z" fill="#404040"/></svg>
<svg class="b" style="left:68px;top:962px;" width="14" height="14" viewBox="0 0 14 14"><rect x="0" y="0.5" width="2" height="1.3" fill="#c0246e"/><rect x="0" y="3.5" width="2" height="1.3" fill="#c0246e"/><rect x="0" y="6.5" width="2" height="1.3" fill="#c0246e"/><rect x="0" y="9.5" width="2" height="1.3" fill="#c0246e"/><rect x="0" y="12" width="2" height="1.3" fill="#c0246e"/><rect x="3" y="0.5" width="2" height="1.3" fill="#aaa"/><rect x="3" y="3.5" width="2" height="1.3" fill="#aaa"/><rect x="3" y="6.5" width="2" height="1.3" fill="#aaa"/><rect x="3" y="9.5" width="2" height="1.3" fill="#aaa"/><rect x="3" y="12" width="2" height="1.3" fill="#aaa"/><rect x="6" y="0.5" width="2" height="1.3" fill="#c0246e"/><rect x="6" y="3.5" width="2" height="1.3" fill="#c0246e"/><rect x="6" y="6.5" width="2" height="1.3" fill="#c0246e"/><rect x="6" y="9.5" width="2" height="1.3" fill="#c0246e"/><rect x="6" y="12" width="2" height="1.3" fill="#c0246e"/><rect x="9" y="0.5" width="2" height="1.3" fill="#aaa"/><rect x="9" y="3.5" width="2" height="1.3" fill="#aaa"/><rect x="9" y="6.5" width="2" height="1.3" fill="#aaa"/><rect x="9" y="9.5" width="2" height="1.3" fill="#aaa"/><rect x="9" y="12" width="2" height="1.3" fill="#aaa"/><rect x="11" y="0.5" width="2" height="1.3" fill="#c0246e"/><rect x="11" y="3.5" width="2" height="1.3" fill="#c0246e"/><rect x="11" y="6.5" width="2" height="1.3" fill="#c0246e"/><rect x="11" y="9.5" width="2" height="1.3" fill="#c0246e"/><rect x="11" y="12" width="2" height="1.3" fill="#c0246e"/></svg>
<div class="t " style="left:87px;top:964.34px;font-size:12px;color:#000;">Data Sets</div>
<svg class="b" style="left:73px;top:983px;" width="7" height="7" viewBox="0 0 7 7"><path d="M7 0V7H0Z" fill="#404040"/></svg>
<svg class="b" style="left:86px;top:978px;" width="16" height="15" viewBox="0 0 16 15"><path d="M0.5 1.5L2.5 0H14L16 3H3Z" fill="#c8468e"/><path d="M0.5 1.5L3 3V15L0.5 12.5Z" fill="#f39a1e"/><rect x="3" y="3" width="13" height="12" fill="#d81b5e"/><path d="M6.2 3V15M9.4 3V15M12.6 3V15M3 6H16M3 9H16M3 12H16" stroke="#f6c4d4" stroke-width="0.8"/><path d="M1 4.5L2.5 5.5M1 7.5L2.5 8.5M1 10.5L2.5 11.5" stroke="#fbd8a0" stroke-width="0.7"/></svg>
<div class="t " style="left:106px;top:981.34px;font-size:12px;color:#000;">Study 1/Solution 1</div>
<svg class="b" style="left:105px;top:995px;" width="14" height="14" viewBox="0 0 14 14"><path d="M0.5 2.0L2.0 0.5H6.5V5.0L5.0 6.5H0.5Z" fill="#e4e4e4" stroke="#aaa" stroke-width="0.9"/><path d="M0.5 2.0H5.0V6.5M5.0 2.0L6.5 0.5" fill="none" stroke="#aaa" stroke-width="0.7"/><path d="M3.5 5.0L5.0 3.5H9.5V8.0L8.0 9.5H3.5Z" fill="#e4e4e4" stroke="#aaa" stroke-width="0.9"/><path d="M3.5 5.0H8.0V9.5M8.0 5.0L9.5 3.5" fill="none" stroke="#aaa" stroke-width="0.7"/><path d="M7 8.5L8.5 7H13V11.5L11.5 13H7Z" fill="#4a88d0" stroke="#3a78c0" stroke-width="0.9"/><path d="M7 8.5H11.5V13M11.5 8.5L13 7" fill="none" stroke="#3a78c0" stroke-width="0.7"/></svg>
<div class="t " style="left:125px;top:998.34px;font-size:12px;color:#000;">Selection</div>
<div class="b" style="left:9px;top:1012px;width:470px;height:5px;overflow:hidden;">
<svg class="b" style="left:64px;top:2px;" width="7" height="7" viewBox="0 0 7 7"><path d="M7 0V7H0Z" fill="#404040"/></svg>
<svg class="b" style="left:77px;top:0px;" width="16" height="15" viewBox="0 0 16 15"><path d="M0.5 1.5L2.5 0H14L16 3H3Z" fill="#c8468e"/><path d="M0.5 1.5L3 3V15L0.5 12.5Z" fill="#f39a1e"/><rect x="3" y="3" width="13" height="12" fill="#d81b5e"/><path d="M6.2 3V15M9.4 3V15M12.6 3V15M3 6H16M3 9H16M3 12H16" stroke="#f6c4d4" stroke-width="0.8"/><path d="M1 4.5L2.5 5.5M1 7.5L2.5 8.5M1 10.5L2.5 11.5" stroke="#fbd8a0" stroke-width="0.7"/></svg>
<div class="t " style="left:97px;top:2.44px;font-size:12px;color:#000;">Standard 1</div>
</div>
<div class="b" style="left:507px;top:140px;width:547px;height:891px;border:1px solid #d0d0d0;background:#f9fafd;"></div>
<div class="t " style="left:515.5px;top:149.45px;font-size:20.5px;color:#2d5c9e;-webkit-text-stroke:0.55px #f9fafd;letter-spacing:-0.9px">Settings</div>
<div class="t " style="left:514.7px;top:178.56px;font-size:14.7px;color:#2d5ea8;-webkit-text-stroke:0.3px #f9fafd;letter-spacing:-0.6px">Material</div>
<svg class="b" style="left:1026px;top:155px;" width="9" height="5" viewBox="0 0 9 5"><path d="M0 0H9L4.5 5Z" fill="#c5cdd6"/></svg>
<svg class="b" style="left:1040px;top:151px;" width="9" height="13" viewBox="0 0 9 13"><path d="M2 1H7V6H9V8H5.5V13H3.5V8H0V6H2Z" fill="#c5cdd6"/></svg>
<div class="t " style="left:513px;top:208.84px;font-size:12px;color:#000;">Label:</div>
<div class="b" style="left:554px;top:204px;width:494px;height:21px;background:#fff;border:1px solid #d6d6d6;"></div>
<div class="t " style="left:559px;top:208.84px;font-size:12px;color:#000;">Helium [gas]</div>
<div class="b" style="left:508px;top:235px;width:545px;height:24px;background:#dfe8f3;"></div>
<div class="t " style="left:537.4px;top:241.20px;font-size:13px;color:#111;">Geometric Entity Selection</div>
<div class="t " style="left:513px;top:273.81px;font-size:11.8px;color:#000;">Geometric entity level:</div>
<div class="b" style="left:641px;top:268px;width:407px;height:20px;background:linear-gradient(#f6f6f6,#ececec 45%,#dedede 55%,#d2d2d2);border:1px solid #7a7a7a;border-radius:3px;"></div>
<div class="t " style="left:653px;top:272.44px;font-size:12px;color:#000;">Domain</div>
<svg class="b" style="left:1034px;top:276px;" width="9" height="5" viewBox="0 0 9 5"><path d="M0 0H9L4.5 5Z" fill="#111"/></svg>
<div class="t " style="left:513px;top:299.61px;font-size:11.8px;color:#000;">Selection:</div>
<div class="b" style="left:641px;top:294px;width:407px;height:20px;background:linear-gradient(#f6f6f6,#ececec 45%,#dedede 55%,#d2d2d2);border:1px solid #7a7a7a;border-radius:3px;"></div>
<div class="t " style="left:653px;top:298.44px;font-size:12px;color:#000;">Manual</div>
<svg class="b" style="left:1034px;top:302px;" width="9" height="5" viewBox="0 0 9 5"><path d="M0 0H9L4.5 5Z" fill="#111"/></svg>
<div class="b" style="left:512px;top:320px;width:40px;height:40px;background:linear-gradient(#c5e4fc,#b3dafb 50%,#9fd0f6);border:1px solid #3160a8;border-radius:3px;box-shadow:0 0 0 1px #c8c8c8;"></div>
<svg class="b" style="left:516px;top:326px;" width="30" height="14" viewBox="0 0 30 14"><rect x="0.5" y="0.5" width="29" height="13" rx="2" fill="#e4e4e4" stroke="#8a8a8a"/><rect x="18.5" y="2.5" width="9" height="9" rx="1" fill="#b0b0b0" stroke="#777"/><text x="4" y="10.5" font-family="Liberation Sans" font-weight="bold" font-size="8.5" fill="#1fa23a">ON</text></svg>
<div class="t " style="left:514.2px;top:364.84px;font-size:12px;color:#000;">Active</div>
<div class="b" style="left:559px;top:320px;width:421px;height:120px;background:#fff;border:1px solid #8a9099;"></div>
<div class="t " style="left:563px;top:323.64px;font-size:12px;color:#000;">41</div>
<svg class="b" style="left:996px;top:322px;" width="14" height="14" viewBox="0 0 14 14"><path d="M0.5 2.0L2.0 0.5H6.5V5.0L5.0 6.5H0.5Z" fill="#e4e4e4" stroke="#aaa" stroke-width="0.9"/><path d="M0.5 2.0H5.0V6.5M5.0 2.0L6.5 0.5" fill="none" stroke="#aaa" stroke-width="0.7"/><path d="M3.5 5.0L5.0 3.5H9.5V8.0L8.0 9.5H3.5Z" fill="#e4e4e4" stroke="#aaa" stroke-width="0.9"/><path d="M3.5 5.0H8.0V9.5M8.0 5.0L9.5 3.5" fill="none" stroke="#aaa" stroke-width="0.7"/><path d="M7 8.5L8.5 7H13V11.5L11.5 13H7Z" fill="#4a88d0" stroke="#3a78c0" stroke-width="0.9"/><path d="M7 8.5H11.5V13M11.5 8.5L13 7" fill="none" stroke="#3a78c0" stroke-width="0.7"/></svg>
<svg class="b" style="left:995px;top:342px;" width="17" height="16" viewBox="0 0 17 16"><path d="M0.5 0.5H9.5V11.5H0.5Z" fill="#fff" stroke="#777"/><path d="M2 3.5H6M2 5.5H6M2 7.5H6" stroke="#999"/><path d="M6.5 4.5H15.5V15.5H6.5Z" fill="#fff" stroke="#2b5b9a"/><path d="M8.5 7.5H13.5M8.5 9.5H13.5M8.5 11.5H13.5" stroke="#2b5b9a"/></svg>
<svg class="b" style="left:995px;top:362px;" width="17" height="16" viewBox="0 0 17 16"><path d="M1 2H10V13H1Z" fill="#e4a93a" stroke="#d49a2a"/><path d="M3.5 2.5Q3.5 0.5 5.5 0.5Q7.5 0.5 7.5 2.5Z" fill="#fff" stroke="#888"/><path d="M6.5 6.5H15.5V15.5H6.5Z" fill="#fff" stroke="#2b5b9a"/></svg>
<svg class="b" style="left:995px;top:381px;" width="16" height="16" viewBox="0 0 16 16"><rect x="3.5" y="3.5" width="9" height="9" fill="#fff" stroke="#666"/><path d="M5 8H11M8 5V11" stroke="#444"/><path d="M6.5 1.5L8 0L9.5 1.5ZM6.5 14.5L8 16L9.5 14.5ZM1.5 6.5L0 8L1.5 9.5ZM14.5 6.5L16 8L14.5 9.5Z" fill="#3a86d0"/></svg>
<svg class="b" style="left:1033px;top:324px;" width="11" height="11" viewBox="0 0 11 11"><path d="M5.5 0V11M0 5.5H11" stroke="#a8a8a8" stroke-width="2.8"/></svg>
<svg class="b" style="left:1033px;top:347px;" width="11" height="4" viewBox="0 0 11 4"><path d="M0 2H11" stroke="#2b4f80" stroke-width="3"/></svg>
<svg class="b" style="left:1031px;top:362px;" width="15" height="16" viewBox="0 0 15 16"><rect x="1.5" y="1.5" width="12" height="13" fill="none" stroke="#3a86d0" stroke-dasharray="2 1.5"/><path d="M5 4L12.5 4L12.5 11Z" fill="#3a86d0" opacity="0.8"/><path d="M1 0L9 14" stroke="#8a6a40" stroke-width="1.2"/><path d="M6 8L10 7L12 14L9 15Z" fill="#f0d0a0"/><path d="M6 8L9.5 7" stroke="#e05040" stroke-width="1.3"/></svg>
<div class="b" style="left:508px;top:449px;width:545px;height:24px;background:#dfe8f3;"></div>
<div class="t " style="left:537.4px;top:455.20px;font-size:13px;color:#111;">Override</div>
<svg class="b" style="left:514px;top:456px;" width="6" height="10" viewBox="0 0 6 10"><path d="M0.5 0.5L5 5L0.5 9.5Z" fill="#fff" stroke="#9a9a9a"/></svg>
<div class="b" style="left:508px;top:476px;width:545px;height:24px;background:#dfe8f3;"></div>
<div class="t " style="left:537.4px;top:482.20px;font-size:13px;color:#111;">Material Properties</div>
<svg class="b" style="left:514px;top:483px;" width="6" height="10" viewBox="0 0 6 10"><path d="M0.5 0.5L5 5L0.5 9.5Z" fill="#fff" stroke="#9a9a9a"/></svg>
<div class="b" style="left:508px;top:503px;width:545px;height:24px;background:#dfe8f3;"></div>
<div class="t " style="left:537.4px;top:509.20px;font-size:13px;color:#111;">Material Contents</div>
<svg class="b" style="left:512px;top:512px;" width="10" height="6" viewBox="0 0 10 6"><path d="M0 0H10L5 6Z" fill="#444"/></svg>
<div class="b" style="left:513px;top:537px;width:535px;height:246px;background:#f9fafd;border:1px solid #a8a8a8;"></div>
<div class="b" style="left:514px;top:538px;width:533px;height:21px;background:linear-gradient(#ffffff,#f4f4f4);border-bottom:1px solid #d6d6d6;"></div>
<div class="b" style="left:542px;top:538px;width:1px;height:21px;background:#e0e0e0;"></div>
<div class="b" style="left:723px;top:538px;width:1px;height:21px;background:#e0e0e0;"></div>
<div class="b" style="left:775px;top:538px;width:1px;height:21px;background:#e0e0e0;"></div>
<div class="b" style="left:838px;top:538px;width:1px;height:21px;background:#e0e0e0;"></div>
<div class="b" style="left:891px;top:538px;width:1px;height:21px;background:#e0e0e0;"></div>
<svg class="b" style="left:520px;top:543px;" width="7" height="6" viewBox="0 0 7 6"><path d="M0 0L3 3L0 6ZM3.5 0L6.5 3L3.5 6Z" fill="#444"/></svg>
<div class="b" style="left:516px;top:540px;width:24px;height:17px;border:1px solid #e8e8e8;"></div>
<div class="t " style="left:547px;top:543.84px;font-size:12px;color:#000;">Property</div>
<div class="t " style="left:729px;top:543.84px;font-size:12px;color:#000;">Name</div>
<div class="t " style="left:781px;top:543.84px;font-size:12px;color:#000;">Value</div>
<div class="t " style="left:844px;top:543.84px;font-size:12px;color:#000;">Unit</div>
<div class="t " style="left:896px;top:543.84px;font-size:12px;color:#000;">Property group</div>
<div class="b" style="left:513px;top:560px;width:537px;height:138px;background:#000;"></div>
<div class="b" style="left:508px;top:798px;width:545px;height:24px;background:#dfe8f3;"></div>
<div class="t " style="left:537.4px;top:804.20px;font-size:13px;color:#111;">Appearance</div>
<svg class="b" style="left:512px;top:807px;" width="10" height="6" viewBox="0 0 10 6"><path d="M0 0H10L5 6Z" fill="#444"/></svg>
<div class="t " style="left:513px;top:836.44px;font-size:12px;color:#000;">Family:</div>
<div class="b" style="left:561px;top:832px;width:487px;height:20px;background:linear-gradient(#f6f6f6,#ececec 45%,#dedede 55%,#d2d2d2);border:1px solid #7a7a7a;border-radius:3px;"></div>
<div class="t " style="left:573px;top:836.44px;font-size:12px;color:#000;">Air</div>
<svg class="b" style="left:1034px;top:840px;" width="9" height="5" viewBox="0 0 9 5"><path d="M0 0H9L4.5 5Z" fill="#111"/></svg>
<div class="b" style="left:1059px;top:140px;width:842px;height:751px;border:1px solid #d0d0d0;background:#f9fafd;"></div>
<div class="b" style="left:1064px;top:146px;width:61px;height:24px;background:#f9fafd;border:1px solid #c9c9c9;border-bottom:none;"></div>
<div class="b" style="left:1060px;top:169px;width:840px;height:1px;background:#d2d2d2;"></div>
<div class="b" style="left:1065px;top:169px;width:59px;height:1px;background:#f9fafd;"></div>
<div class="t " style="left:1069px;top:152.72px;font-size:12.5px;color:#2d5c9e;-webkit-text-stroke:0">Graphics</div>
<div class="b" style="left:1133px;top:146px;width:40px;height:23px;background:#ebebeb;"></div>
<div class="t " style="left:1137.5px;top:152.72px;font-size:12.5px;color:#000;">Plot 6</div>
<svg class="b" style="left:1873px;top:155px;" width="9" height="5" viewBox="0 0 9 5"><path d="M0 0H9L4.5 5Z" fill="#c5cdd6"/></svg>
<svg class="b" style="left:1887px;top:151px;" width="9" height="13" viewBox="0 0 9 13"><path d="M2 1H7V6H9V8H5.5V13H3.5V8H0V6H2Z" fill="#c5cdd6"/></svg>
<svg class="b" style="left:1067px;top:179px;" width="13" height="13" viewBox="0 0 13 13"><circle cx="5.5" cy="5.5" r="4.6" fill="none" stroke="#2b4f80" stroke-width="1.6"/><path d="M8.8 8.8L12.5 12.5" stroke="#2b4f80" stroke-width="2.4"/><path d="M3 5.5H8M5.5 3V8" stroke="#2b4f80" stroke-width="1.2"/></svg>
<svg class="b" style="left:1091px;top:179px;" width="13" height="13" viewBox="0 0 13 13"><circle cx="5.5" cy="5.5" r="4.6" fill="none" stroke="#2b4f80" stroke-width="1.6"/><path d="M8.8 8.8L12.5 12.5" stroke="#2b4f80" stroke-width="2.4"/><path d="M3 5.5H8" stroke="#2b4f80" stroke-width="1.2"/></svg>
<svg class="b" style="left:1113px;top:178px;" width="17" height="14" viewBox="0 0 17 14"><rect x="0.5" y="6.5" width="7" height="7" fill="none" stroke="#2b4f80" stroke-dasharray="1.5 1"/><circle cx="9.5" cy="5.5" r="4.6" fill="#f9fafd" fill-opacity="0.5" stroke="#2b4f80" stroke-width="1.6"/><path d="M12.8 8.8L16 12.5" stroke="#2b4f80" stroke-width="2.4"/><path d="M7 5.5H12M9.5 3V8" stroke="#2b4f80" stroke-width="1.2"/></svg>
<svg class="b" style="left:1138px;top:177px;" width="16" height="15" viewBox="0 0 16 15"><rect x="3.5" y="3.5" width="9" height="8" fill="#fff" stroke="#666"/><path d="M5 7.5H11M8 5V10" stroke="#444"/><path d="M6.5 1.5L8 0L9.5 1.5ZM6.5 13.5L8 15L9.5 13.5ZM1.5 6L0 7.5L1.5 9ZM14.5 6L16 7.5L14.5 9Z" fill="#3a86d0"/></svg>
<svg class="b" style="left:1162px;top:177px;" width="15" height="15" viewBox="0 0 15 15"><rect x="0.5" y="0.5" width="14" height="14" fill="#fff" stroke="#555"/><path d="M4 7.5H11M7.5 4V11" stroke="#555"/><path d="M6 3.5L7.5 2L9 3.5ZM6 11.5L7.5 13L9 11.5ZM3.5 6L2 7.5L3.5 9ZM11.5 6L13 7.5L11.5 9Z" fill="#3a86d0"/></svg>
<div class="b" style="left:1188px;top:177px;width:1px;height:15px;background:#c9d0d8;"></div>
<div class="b" style="left:1247px;top:177px;width:1px;height:15px;background:#c9d0d8;"></div>
<div class="b" style="left:1407px;top:177px;width:1px;height:15px;background:#c9d0d8;"></div>
<div class="b" style="left:1519px;top:177px;width:1px;height:15px;background:#c9d0d8;"></div>
<div class="b" style="left:1655px;top:177px;width:1px;height:15px;background:#c9d0d8;"></div>
<svg class="b" style="left:1202px;top:176px;" width="17" height="16" viewBox="0 0 17 16"><path d="M8.5 14V2M6.5 4L8.5 1L10.5 4" stroke="#3a78c0" stroke-width="1.2" fill="none"/><path d="M8.5 14L1 8" stroke="#3aa043" stroke-width="1.2"/><path d="M8.5 14L16 8M13 8L16 8L15.5 11" stroke="#e0306a" stroke-width="1.2" fill="none"/></svg>
<svg class="b" style="left:1226px;top:183px;" width="8" height="5" viewBox="0 0 8 5"><path d="M0 0H8L4 5Z" fill="#111"/></svg>
<svg class="b" style="left:1261px;top:178px;" width="16" height="12" viewBox="0 0 16 12"><rect x="0.5" y="3.5" width="15" height="8" rx="4" fill="#e8e8e8" stroke="#bbb"/><path d="M5 7L12 1L14 3L7 9Z" fill="#ccc" stroke="#aaa" stroke-width="0.6"/></svg>
<svg class="b" style="left:1285px;top:178px;" width="17" height="12" viewBox="0 0 17 12"><rect x="0.5" y="0.5" width="11" height="7" rx="3.5" fill="#e0e0e0" stroke="#ccc"/><rect x="5" y="4" width="12" height="8" rx="4" fill="#aaa"/></svg>
<div class="b" style="left:1308px;top:176px;width:18px;height:18px;background:linear-gradient(#d6ebfc,#a9d3f5);border:1px solid #3a6fb0;border-radius:2px;"></div>
<svg class="b" style="left:1309px;top:179px;" width="16" height="12" viewBox="0 0 16 12"><rect x="0.5" y="0.5" width="15" height="11" rx="4" fill="#0f4c94" stroke="#0a3a78"/></svg>
<svg class="b" style="left:1333px;top:178px;" width="16" height="12" viewBox="0 0 16 12"><rect x="0.75" y="0.75" width="14.5" height="10.5" rx="5" fill="#e6e6e6" stroke="#3a78c0" stroke-width="1.5"/><path d="M1 6H15" stroke="#2b4f80" stroke-width="1.2"/></svg>
<svg class="b" style="left:1357px;top:178px;" width="16" height="12" viewBox="0 0 16 12"><rect x="0.75" y="0.75" width="14.5" height="10.5" rx="5" fill="#e6e6e6" stroke="#3a78c0" stroke-width="1.5"/><path d="M1 3.5H15M1 8.5H15" stroke="#2b4f80" stroke-width="1.2"/><rect x="0" y="2.5" width="2" height="2" fill="#2b4f80"/><rect x="14" y="2.5" width="2" height="2" fill="#2b4f80"/><rect x="0" y="7.5" width="2" height="2" fill="#2b4f80"/><rect x="14" y="7.5" width="2" height="2" fill="#2b4f80"/></svg>
<svg class="b" style="left:1381px;top:178px;" width="15" height="14" viewBox="0 0 15 14"><path d="M1 1H13V13H1Z" fill="#bbb"/><path d="M0 0L15 14" stroke="#2b4f80" stroke-width="1.5"/></svg>
<svg class="b" style="left:1421px;top:176px;" width="16" height="14" viewBox="0 0 16 14"><rect x="0.5" y="5.5" width="15" height="8" rx="3" fill="#ddd" stroke="#777"/><rect x="3.5" y="0.5" width="9" height="8" fill="#2b4f80" stroke="#fff" stroke-dasharray="1.5 1"/><rect x="3" y="0" width="10" height="9" fill="none" stroke="#2b4f80" stroke-dasharray="1.5 1"/></svg>
<svg class="b" style="left:1445px;top:177px;" width="16" height="13" viewBox="0 0 16 13"><rect x="0.5" y="5.5" width="15" height="7" rx="3" fill="#aaa"/><rect x="3.5" y="0.5" width="9" height="8" fill="#eee" stroke="#aaa" stroke-dasharray="1.5 1"/></svg>
<svg class="b" style="left:1469px;top:177px;" width="16" height="15" viewBox="0 0 16 15"><rect x="0.75" y="0.75" width="14" height="13" fill="none" stroke="#3a78c0" stroke-width="1.3" stroke-dasharray="2 1.5"/><rect x="3" y="3" width="7" height="7" fill="#8ab5e0"/><path d="M7 6L14 13M7 6V10.5M7 6H11.5" stroke="#2b4f80" stroke-width="1.5" fill="none"/></svg>
<svg class="b" style="left:1493px;top:177px;" width="16" height="15" viewBox="0 0 16 15"><rect x="1.5" y="1.5" width="13" height="12" fill="none" stroke="#3a78c0" stroke-width="1.3" stroke-dasharray="2 1.5"/><path d="M5 4L12.5 4L12.5 11Z" fill="#5a96d6"/><path d="M1 0L9 14" stroke="#8a6a40" stroke-width="1.2"/><path d="M6 8L10 7L12 14L9 15Z" fill="#f0d0a0"/><path d="M6 8L9.5 7" stroke="#e05040" stroke-width="1.3"/></svg>
<div class="b" style="left:1532px;top:176px;width:18px;height:18px;background:linear-gradient(#d6ebfc,#a9d3f5);border:1px solid #3a6fb0;border-radius:2px;"></div>
<svg class="b" style="left:1534px;top:179px;" width="14" height="12" viewBox="0 0 14 12"><ellipse cx="7" cy="6" rx="6" ry="3" fill="#aaa" opacity="0.7"/><path d="M1 0L13 12" stroke="#2b4f80" stroke-width="1.3"/></svg>
<div class="b" style="left:1556px;top:176px;width:18px;height:18px;background:linear-gradient(#e8f2fb,#cfe4f6);border:1.5px solid #3a6fb0;border-radius:2px;"></div>
<svg class="b" style="left:1558px;top:179px;" width="14" height="12" viewBox="0 0 14 12"><rect x="0.5" y="0.5" width="13" height="11" fill="#fff" stroke="#2b4f80"/><path d="M0.5 2.5H13.5" stroke="#2b4f80"/><ellipse cx="7" cy="7" rx="5" ry="2.5" fill="#2b4f80"/><circle cx="7" cy="7" r="1.2" fill="#fff"/></svg>
<svg class="b" style="left:1581px;top:178px;" width="16" height="13" viewBox="0 0 16 13"><rect x="0.5" y="0.5" width="15" height="12" fill="#fff" stroke="#2b4f80"/><path d="M0.5 2.5H15.5" stroke="#2b4f80"/><ellipse cx="8" cy="7.5" rx="5" ry="2.5" fill="#bbb"/><path d="M4 3.5L12 11.5" stroke="#2b4f80"/></svg>
<svg class="b" style="left:1605px;top:177px;" width="16" height="15" viewBox="0 0 16 15"><rect x="0.5" y="0.5" width="15" height="14" fill="#fff" stroke="#2b4f80"/><path d="M0.5 2.5H15.5" stroke="#2b4f80"/><ellipse cx="8" cy="6" rx="4.5" ry="2.2" fill="#2b4f80"/><ellipse cx="8" cy="11" rx="4.5" ry="2" fill="#bbb"/><path d="M5 9L11 13" stroke="#2b4f80"/></svg>
<svg class="b" style="left:1630px;top:178px;" width="13" height="14" viewBox="0 0 13 14"><path d="M3 4A5 5 0 1 0 6 2.5" fill="none" stroke="#2b4f80" stroke-width="1.4"/><path d="M1 1.5L5.5 0.5L5 5Z" fill="#2b4f80"/></svg>
<svg class="b" style="left:1668px;top:178px;" width="17" height="13" viewBox="0 0 17 13"><path d="M0 3H4L6 0.5H11L13 3H17V13H0Z" fill="#3a78c0"/><circle cx="8.5" cy="7.5" r="3.6" fill="#fff"/><circle cx="8.5" cy="7.5" r="2.2" fill="#3a78c0"/></svg>
<svg class="b" style="left:1693px;top:176px;" width="16" height="17" viewBox="0 0 16 17"><rect x="3.5" y="0.5" width="9" height="6" fill="#fff" stroke="#3a78c0"/><rect x="0" y="6" width="16" height="8" rx="1" fill="#3a78c0"/><rect x="3" y="11" width="10" height="6" fill="#3a78c0"/><rect x="11" y="9" width="2" height="1.5" fill="#fff"/><rect x="8" y="9" width="2" height="1.5" fill="#fff"/></svg>
<div class="b" style="left:1060px;top:198px;width:840px;height:692px;background:#fff;"></div>
<svg class="b" style="left:1060px;top:198px;" width="840" height="692" viewBox="1060 198 840 692"><path d="M1105.5 203.5H1891.5Q1895.5 203.5 1895.5 207.5V871.5H1105.5Z" fill="none" stroke="#000" stroke-width="1.2"/><path d="M1128.4 871.5V878.5M1128.4 197.5V203.5" stroke="#000" stroke-width="1"/><text x="1128.9" y="887.8" font-family="Liberation Sans" font-size="12.3" fill="#333">-0.7</text><path d="M1184.3 871.5V878.5M1184.3 197.5V203.5" stroke="#555" stroke-width="1"/><text x="1184.8" y="887.8" font-family="Liberation Sans" font-size="12.3" fill="#333">-0.6</text><path d="M1240.2 871.5V878.5M1240.2 197.5V203.5" stroke="#555" stroke-width="1"/><text x="1240.7" y="887.8" font-family="Liberation Sans" font-size="12.3" fill="#333">-0.5</text><path d="M1296.1 871.5V878.5M1296.1 197.5V203.5" stroke="#555" stroke-width="1"/><text x="1296.6" y="887.8" font-family="Liberation Sans" font-size="12.3" fill="#333">-0.4</text><path d="M1352.0 871.5V878.5M1352.0 197.5V203.5" stroke="#555" stroke-width="1"/><text x="1352.5" y="887.8" font-family="Liberation Sans" font-size="12.3" fill="#333">-0.3</text><path d="M1407.8 871.5V878.5M1407.8 197.5V203.5" stroke="#555" stroke-width="1"/><text x="1408.3" y="887.8" font-family="Liberation Sans" font-size="12.3" fill="#333">-0.2</text><path d="M1463.7 871.5V878.5M1463.7 197.5V203.5" stroke="#555" stroke-width="1"/><text x="1464.2" y="887.8" font-family="Liberation Sans" font-size="12.3" fill="#333">-0.1</text><path d="M1519.6 871.5V878.5M1519.6 197.5V203.5" stroke="#555" stroke-width="1"/><text x="1520.1" y="887.8" font-family="Liberation Sans" font-size="12.3" fill="#333">0</text><path d="M1575.5 871.5V878.5M1575.5 197.5V203.5" stroke="#555" stroke-width="1"/><text x="1576.0" y="887.8" font-family="Liberation Sans" font-size="12.3" fill="#333">0.1</text><path d="M1631.4 871.5V878.5M1631.4 197.5V203.5" stroke="#555" stroke-width="1"/><text x="1631.9" y="887.8" font-family="Liberation Sans" font-size="12.3" fill="#333">0.2</text><path d="M1687.2 871.5V878.5M1687.2 197.5V203.5" stroke="#555" stroke-width="1"/><text x="1687.7" y="887.8" font-family="Liberation Sans" font-size="12.3" fill="#333">0.3</text><path d="M1743.1 871.5V878.5M1743.1 197.5V203.5" stroke="#555" stroke-width="1"/><text x="1743.6" y="887.8" font-family="Liberation Sans" font-size="12.3" fill="#333">0.4</text><path d="M1799.0 871.5V878.5M1799.0 197.5V203.5" stroke="#555" stroke-width="1"/><text x="1799.5" y="887.8" font-family="Liberation Sans" font-size="12.3" fill="#333">0.5</text><path d="M1854.9 871.5V878.5M1854.9 197.5V203.5" stroke="#555" stroke-width="1"/><text x="1855.4" y="887.8" font-family="Liberation Sans" font-size="12.3" fill="#333">0.6</text><path d="M1098 866.3H1105.5M1895.5 866.3H1900" stroke="#888" stroke-width="1"/><text x="1097" y="875.7" text-anchor="end" font-family="Liberation Sans" font-size="12.3" fill="#333">-0.6</text><path d="M1098 810.4H1105.5M1895.5 810.4H1900" stroke="#888" stroke-width="1"/><text x="1097" y="819.8" text-anchor="end" font-family="Liberation Sans" font-size="12.3" fill="#333">-0.5</text><path d="M1098 754.5H1105.5M1895.5 754.5H1900" stroke="#888" stroke-width="1"/><text x="1097" y="763.9" text-anchor="end" font-family="Liberation Sans" font-size="12.3" fill="#333">-0.4</text><path d="M1098 698.6H1105.5M1895.5 698.6H1900" stroke="#888" stroke-width="1"/><text x="1097" y="708.0" text-anchor="end" font-family="Liberation Sans" font-size="12.3" fill="#333">-0.3</text><path d="M1098 642.8H1105.5M1895.5 642.8H1900" stroke="#888" stroke-width="1"/><text x="1097" y="652.2" text-anchor="end" font-family="Liberation Sans" font-size="12.3" fill="#333">-0.2</text><path d="M1098 586.9H1105.5M1895.5 586.9H1900" stroke="#888" stroke-width="1"/><text x="1097" y="596.3" text-anchor="end" font-family="Liberation Sans" font-size="12.3" fill="#333">-0.1</text><path d="M1098 531.0H1105.5M1895.5 531.0H1900" stroke="#888" stroke-width="1"/><text x="1097" y="540.4" text-anchor="end" font-family="Liberation Sans" font-size="12.3" fill="#333">0</text><path d="M1098 475.1H1105.5M1895.5 475.1H1900" stroke="#888" stroke-width="1"/><text x="1097" y="484.5" text-anchor="end" font-family="Liberation Sans" font-size="12.3" fill="#333">0.1</text><path d="M1098 419.2H1105.5M1895.5 419.2H1900" stroke="#888" stroke-width="1"/><text x="1097" y="428.6" text-anchor="end" font-family="Liberation Sans" font-size="12.3" fill="#333">0.2</text><path d="M1098 363.4H1105.5M1895.5 363.4H1900" stroke="#888" stroke-width="1"/><text x="1097" y="372.8" text-anchor="end" font-family="Liberation Sans" font-size="12.3" fill="#333">0.3</text><path d="M1098 307.5H1105.5M1895.5 307.5H1900" stroke="#888" stroke-width="1"/><text x="1097" y="316.9" text-anchor="end" font-family="Liberation Sans" font-size="12.3" fill="#333">0.4</text><path d="M1098 251.6H1105.5M1895.5 251.6H1900" stroke="#888" stroke-width="1"/><text x="1097" y="261.0" text-anchor="end" font-family="Liberation Sans" font-size="12.3" fill="#333">0.5</text><path d="M1100.5 876.5L1105.5 871.5L1110.5 876.5Z" fill="#000"/><path d="M1101.5 715.5L1105 719.5L1101.5 723.5Z" fill="#000"/><path d="M1170.5 203.5V871.5" stroke="#888" stroke-width="1"/><path d="M1869.5 203.5V871.5" stroke="#000" stroke-width="1.2"/><path d="M1251.5 325.5L1255.5 321.5H1324.4V361.0A104.89999999999986 108.30000000000001 0 0 0 1429.3 469.3H1609.8999999999999A104.89999999999986 108.30000000000001 0 0 0 1714.7999999999997 361.0V321.5H1783.6999999999998L1787.6999999999998 325.5V736.5L1783.6999999999998 740.5H1714.7999999999997V701.0A104.89999999999986 108.30000000000001 0 0 0 1609.8999999999999 592.7H1429.3A104.89999999999986 108.30000000000001 0 0 0 1324.4 701.0V740.5H1255.5L1251.5 736.5Z" fill="none" stroke="#1a1a1a" stroke-width="1"/><path d="M1456.5 469.3V592.7M1582.5 469.3V592.7" stroke="#888" stroke-width="1"/><path d="M1458.5 469.3V592.7M1580.5 469.3V592.7" stroke="#111" stroke-width="1"/><circle cx="1519.9" cy="531.1" r="70.2" fill="none" stroke="#1a1a1a" stroke-width="1"/><circle cx="1519.8" cy="531.1" r="52.6" fill="none" stroke="#2a2aff" stroke-width="1"/><circle cx="1477.8" cy="469.5" r="20.3" fill="none" stroke="#1a1a1a" stroke-width="1"/><circle cx="1477.8" cy="592.5" r="20.3" fill="none" stroke="#1a1a1a" stroke-width="1"/><circle cx="1561.6" cy="469.5" r="20.3" fill="none" stroke="#1a1a1a" stroke-width="1"/><circle cx="1561.6" cy="592.5" r="20.3" fill="none" stroke="#1a1a1a" stroke-width="1"/></svg>
<svg class="b" style="left:1872px;top:208px;" width="16" height="18" viewBox="0 0 16 18"><defs><linearGradient id="lg1" x1="0" y1="0" x2="1" y2="0"><stop offset="0" stop-color="#f8f070"/><stop offset="0.45" stop-color="#e8e040"/><stop offset="0.7" stop-color="#3aa0f0"/><stop offset="1" stop-color="#0a1a90"/></linearGradient></defs><path d="M2 3L12 0.5L14 4L15 14L6 18L1 15Z" fill="#e8e8e8" opacity="0.7"/><rect x="1" y="3" width="14" height="11" rx="3" fill="#1a3ac0"/><rect x="3" y="4.5" width="11" height="8" rx="1.5" fill="url(#lg1)"/><path d="M3 4.5L9 8.5L3 12.5Z" fill="#f8f060" opacity="0.8"/><path d="M1.5 5V12" stroke="#3050d0" stroke-width="1.5"/></svg>
<div class="b" style="left:1059px;top:897px;width:842px;height:134px;border:1px solid #d0d0d0;background:#f9fafd;"></div>
<div class="b" style="left:1064px;top:902px;width:67px;height:23px;background:#ebebeb;"></div>
<div class="t " style="left:1068.2px;top:908.72px;font-size:12.5px;color:#000;">Messages</div>
<div class="b" style="left:1139px;top:902px;width:60px;height:23px;background:#ebebeb;"></div>
<div class="t " style="left:1143.4px;top:908.72px;font-size:12.5px;color:#000;">Progress</div>
<div class="b" style="left:1207px;top:902px;width:30px;height:23px;background:#ebebeb;"></div>
<div class="t " style="left:1211px;top:908.72px;font-size:12.5px;color:#000;">Log</div>
<div class="b" style="left:1245px;top:902px;width:53px;height:24px;background:#f9fafd;border:1px solid #c9c9c9;border-bottom:none;"></div>
<div class="b" style="left:1060px;top:925px;width:840px;height:1px;background:#d2d2d2;"></div>
<div class="b" style="left:1246px;top:925px;width:51px;height:1px;background:#f9fafd;"></div>
<div class="t " style="left:1249.8px;top:908.72px;font-size:12.5px;color:#2d5c9e;-webkit-text-stroke:0">Table 1</div>
<svg class="b" style="left:1857px;top:913px;" width="9" height="5" viewBox="0 0 9 5"><path d="M0 0H9L4.5 5Z" fill="#c5cdd6"/></svg>
<svg class="b" style="left:1871px;top:908px;" width="9" height="13" viewBox="0 0 9 13"><path d="M2 1H7V6H9V8H5.5V13H3.5V8H0V6H2Z" fill="#c5cdd6"/></svg>
<svg class="b" style="left:1886px;top:909px;" width="11" height="11" viewBox="0 0 11 11"><path d="M1 1L10 10M10 1L1 10" stroke="#c5cdd6" stroke-width="1.5"/></svg>
<svg class="b" style="left:1070px;top:933px;" width="16" height="16" viewBox="0 0 16 16"><rect x="0.75" y="0.75" width="14.5" height="14.5" rx="1" fill="#e6e6e6" stroke="#3a78c0" stroke-width="1.5"/><rect x="3" y="3" width="2" height="2" fill="#3a78c0"/><rect x="7" y="3" width="2" height="2" fill="#3a78c0"/><rect x="11" y="3" width="2" height="2" fill="#e03050"/><circle cx="4" cy="9.5" r="1.8" fill="#3a78c0"/><circle cx="8" cy="9.5" r="1.8" fill="#3a78c0"/><circle cx="12" cy="10.5" r="1.8" fill="#3a78c0"/><path d="M4 11V14M8 11V14M12 7V9" stroke="#3a78c0"/></svg>
<div class="t" style="left:1093px;top:933px;font-size:8px;font-weight:bold;color:#b0256e;line-height:8px;letter-spacing:-0.3px">&nbsp;8.85<br>e-12</div>
<svg class="b" style="left:1120px;top:933px;" width="12" height="16" viewBox="0 0 12 16"><path d="M1 0L6 9" stroke="#7a5a30" stroke-width="1.2"/><path d="M4 9L8 8L11 15L7 16Z" fill="#e8c898"/></svg>
<svg class="b" style="left:1144px;top:933px;" width="12" height="16" viewBox="0 0 12 16"><path d="M0.5 2.5H11.5M4 2.5V0.5H8V2.5" stroke="#3a78c0" fill="none"/><path d="M1.5 3.5L2.5 15.5H9.5L10.5 3.5Z" fill="none" stroke="#3a78c0" stroke-width="1.2"/><path d="M4.5 5V14M6 5V14M7.5 5V14" stroke="#3a78c0"/></svg>
<svg class="b" style="left:1167px;top:933px;" width="15" height="16" viewBox="0 0 15 16"><path d="M1.5 0V15.5H15" stroke="#777" fill="none"/><rect x="3.5" y="3.5" width="10" height="9" fill="#fff" stroke="#b0256e"/><path d="M3.5 6.5H13.5M3.5 9.5H13.5M8.5 3.5V12.5" stroke="#b0256e"/><rect x="4" y="4" width="9" height="2" fill="#d69ab8"/></svg>
<div class="b" style="left:1191px;top:933px;width:15px;height:15px;background:#b0256e;"></div>
<svg class="b" style="left:1214px;top:933px;" width="17" height="16" viewBox="0 0 17 16"><path d="M0.5 0.5H10.5V10.5H0.5Z" fill="#fff" stroke="#777"/><path d="M2 3H8M2 5H6" stroke="#999"/><rect x="5.5" y="4.5" width="11" height="11" fill="#fff" stroke="#3a78c0"/><path d="M7.5 7.5H14.5M7.5 10H14.5M7.5 12.5H14.5M11 10V13" stroke="#3a78c0"/></svg>
<svg class="b" style="left:1238px;top:934px;" width="17" height="14" viewBox="0 0 17 14"><path d="M0.5 1.5H14.5V13.5H0.5Z" fill="#fff" stroke="#777"/><path d="M0.5 3.5H14.5" stroke="#777"/><path d="M6 8H15M13 5.5L16 8L13 10.5" stroke="#3a78c0" stroke-width="1.6" fill="none"/></svg>
<svg class="b" style="left:1262px;top:933px;" width="15" height="15" viewBox="0 0 15 15"><rect x="0.5" y="0.5" width="14" height="14" fill="#fff" stroke="#b0256e"/><path d="M0.5 4H14.5M0.5 7.5H14.5M0.5 11H14.5M5 0.5V14.5M10 0.5V14.5" stroke="#b0256e"/><rect x="5" y="4" width="5" height="3.5" fill="#d69ab8"/></svg>
<svg class="b" style="left:1286px;top:939px;" width="8" height="5" viewBox="0 0 8 5"><path d="M0 0H8L4 5Z" fill="#111"/></svg>
<div class="b" style="left:1620px;top:957px;width:271px;height:66px;background:#fff;border:1px solid #b4b4b4;border-left:none;"></div>
<div class="b" style="left:1620px;top:958px;width:270px;height:22px;background:linear-gradient(#fafafa,#ececec);border-bottom:1px solid #d0d0d0;"></div>
<div class="b" style="left:1620px;top:998px;width:270px;height:1px;background:#c8c8c8;"></div>
<div class="b" style="left:1056px;top:957px;width:564px;height:65px;background:#000;"></div>
<div class="b" style="left:0px;top:1035px;width:1904px;height:27px;background:#efeceb;"></div>
<div class="t " style="left:1521px;top:1045.48px;font-size:11.6px;color:#111;letter-spacing:-0.35px">1.43 GB | 1.47 GB</div>
<div class="b" style="left:1662px;top:1050px;width:1px;height:1px;background:#999;"></div>
</body></html>
